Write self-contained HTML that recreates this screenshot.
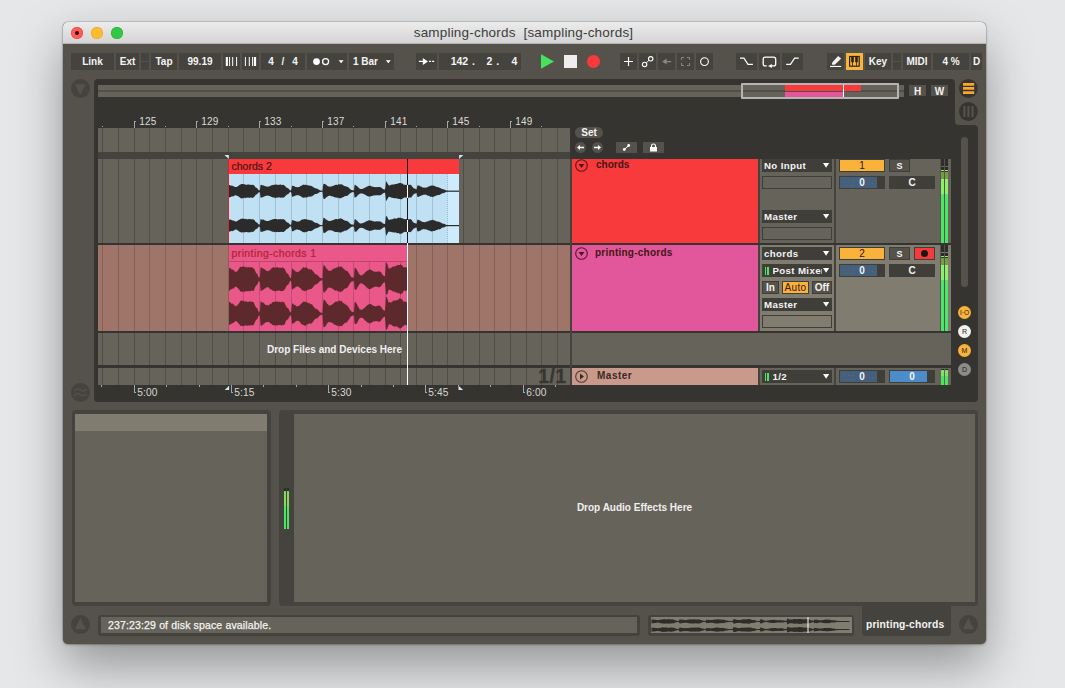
<!DOCTYPE html>
<html><head><meta charset="utf-8"><title>sampling-chords</title>
<style>
html,body{margin:0;padding:0}
body{width:1065px;height:688px;position:relative;overflow:hidden;background:#e6e7e8;font-family:"Liberation Sans",sans-serif}
body>div,body>svg{position:absolute;display:block}
.t{color:#f4f4f4;font-size:10px;font-weight:700;white-space:nowrap;}
</style></head><body>
<div style="left:63px;top:22px;width:923px;height:621.5px;background:#55524b;border-radius:5px;box-shadow:0 0 0 0.5px rgba(0,0,0,.22),0 22px 50px rgba(0,0,0,.36),0 1px 3px rgba(0,0,0,.22);"></div>
<div style="left:63px;top:22px;width:923px;height:22px;background:linear-gradient(#ececec,#d4d4d4);border-radius:5px 5px 0 0;border-bottom:0.5px solid #b4b4b4;box-sizing:border-box;"></div>
<div style="left:71px;top:27px;width:12px;height:12px;background:#fc5b57;border-radius:50%;box-shadow:inset 0 0 0 0.5px #e04640;"></div>
<div style="left:91px;top:27px;width:12px;height:12px;background:#fdbc2e;border-radius:50%;box-shadow:inset 0 0 0 0.5px #e0a028;"></div>
<div style="left:111px;top:27px;width:12px;height:12px;background:#33c748;border-radius:50%;box-shadow:inset 0 0 0 0.5px #27aa35;"></div>
<div style="left:75px;top:31px;width:4px;height:4px;background:#3a0d0b;border-radius:50%;"></div>
<div class="t" style="left:62px;top:22.3px;width:923px;height:22px;line-height:22px;text-align:center;font-weight:400;font-size:13.5px;letter-spacing:0.19px;color:#3c3c3c;">sampling-chords&nbsp;&nbsp;[sampling-chords]</div>
<div style="left:71px;top:53px;width:43px;height:17px;background:#45433d;"></div>
<div class="t" style="left:71px;top:53.1px;width:43px;height:17px;line-height:17px;text-align:center;">Link</div>
<div style="left:116px;top:53px;width:23px;height:17px;background:#45433d;"></div>
<div class="t" style="left:116px;top:53.1px;width:23px;height:17px;line-height:17px;text-align:center;">Ext</div>
<div style="left:141px;top:53px;width:8px;height:8px;background:#45433d;"></div>
<div style="left:141px;top:62px;width:8px;height:8px;background:#45433d;"></div>
<div style="left:151px;top:53px;width:26px;height:17px;background:#45433d;"></div>
<div class="t" style="left:151px;top:53.1px;width:26px;height:17px;line-height:17px;text-align:center;">Tap</div>
<div style="left:179px;top:53px;width:42px;height:17px;background:#45433d;"></div>
<div class="t" style="left:179px;top:53.1px;width:42px;height:17px;line-height:17px;text-align:center;">99.19</div>
<div style="left:223px;top:53px;width:17px;height:17px;background:#45433d;"></div>
<div style="left:242px;top:53px;width:17px;height:17px;background:#45433d;"></div>
<div style="left:261px;top:53px;width:44px;height:17px;background:#45433d;"></div>
<div class="t" style="left:261px;top:53.1px;width:44px;height:17px;line-height:17px;text-align:center;word-spacing:5px;">4 / 4</div>
<div style="left:307px;top:53px;width:40px;height:17px;background:#45433d;"></div>
<div style="left:349px;top:53px;width:45px;height:17px;background:#45433d;"></div>
<div class="t" style="left:353px;top:53.1px;width:30px;height:17px;line-height:17px;">1 Bar</div>
<div style="left:416px;top:53px;width:21px;height:17px;background:#45433d;"></div>
<div style="left:439px;top:53px;width:82px;height:17px;background:#45433d;"></div>
<div class="t" style="left:439px;top:53.1px;width:36px;height:17px;line-height:17px;text-align:right;font-size:10.5px;word-spacing:1px;">142 .</div>
<div class="t" style="left:476px;top:53.1px;width:23.2px;height:17px;line-height:17px;text-align:right;font-size:10.5px;word-spacing:1px;">2 .</div>
<div class="t" style="left:500px;top:53.1px;width:17.3px;height:17px;line-height:17px;text-align:right;font-size:10.5px;">4</div>
<div style="left:620px;top:53px;width:17px;height:17px;background:#45433d;"></div>
<div style="left:639px;top:53px;width:17px;height:17px;background:#45433d;"></div>
<div style="left:658px;top:53px;width:17px;height:17px;background:#45433d;"></div>
<div style="left:677px;top:53px;width:17px;height:17px;background:#45433d;"></div>
<div style="left:696px;top:53px;width:17px;height:17px;background:#45433d;"></div>
<div style="left:736px;top:53px;width:21px;height:17px;background:#45433d;"></div>
<div style="left:759px;top:53px;width:21px;height:17px;background:#45433d;"></div>
<div style="left:782px;top:53px;width:21px;height:17px;background:#45433d;"></div>
<div style="left:827px;top:53px;width:17px;height:17px;background:#45433d;"></div>
<div style="left:846px;top:53px;width:17px;height:17px;background:#f9b23a;"></div>
<div style="left:865px;top:53px;width:26px;height:17px;background:#45433d;"></div>
<div class="t" style="left:865px;top:53.1px;width:26px;height:17px;line-height:17px;text-align:center;">Key</div>
<div style="left:893px;top:53px;width:8px;height:8px;background:#45433d;"></div>
<div style="left:893px;top:62px;width:8px;height:8px;background:#45433d;"></div>
<div style="left:903px;top:53px;width:28px;height:17px;background:#45433d;"></div>
<div class="t" style="left:903px;top:53.1px;width:28px;height:17px;line-height:17px;text-align:center;">MIDI</div>
<div style="left:933px;top:53px;width:36px;height:17px;background:#45433d;"></div>
<div class="t" style="left:933px;top:53.1px;width:36px;height:17px;line-height:17px;text-align:center;">4 %</div>
<div style="left:971px;top:53px;width:11px;height:17px;background:#45433d;"></div>
<div class="t" style="left:971px;top:53.1px;width:11px;height:17px;line-height:17px;text-align:center;">D</div>
<svg style="left:223px;top:53px;" width="17" height="17" viewBox="0 0 17 17"><g fill="#fff"><rect x="2.8" y="4" width="2.1" height="9"/><rect x="6.1" y="4" width="1" height="9"/><rect x="9.2" y="4" width="1" height="9"/><rect x="13.1" y="4" width="1" height="9"/></g></svg>
<svg style="left:242px;top:53px;" width="17" height="17" viewBox="0 0 17 17"><g fill="#fff"><rect x="2.9" y="4" width="1" height="9"/><rect x="6.8" y="4" width="1" height="9"/><rect x="10.1" y="4" width="1.1" height="9"/><rect x="12" y="4" width="2.1" height="9"/></g></svg>
<svg style="left:307px;top:53px;" width="40" height="17" viewBox="0 0 40 17"><circle cx="9.5" cy="8.6" r="3.4" fill="#fff"/><circle cx="18.6" cy="8.6" r="3" fill="none" stroke="#fff" stroke-width="1.3"/><path d="M31.6 7.2h5l-2.5 3z" fill="#fff"/></svg>
<svg style="left:349px;top:53px;" width="45" height="17" viewBox="0 0 45 17"><path d="M36.8 7.2h5l-2.5 3z" fill="#fff"/></svg>
<svg style="left:416px;top:53px;" width="21" height="17" viewBox="0 0 21 17"><path d="M2.8 8.4h5M13 8.4h2.1M16.100 8.4h2.1" stroke="#fff" stroke-width="1.4"/><path d="M6.8 4.9L12 8.4L6.8 11.9z" fill="#fff"/></svg>
<svg style="left:540px;top:53px;" width="16" height="17" viewBox="0 0 16 17"><path d="M1 1.2L14 8.5L1 15.8z" fill="#46e35c"/></svg>
<div style="left:564px;top:55px;width:13px;height:13px;background:#eeeeee;"></div>
<div style="left:587px;top:55px;width:13px;height:13px;background:#f93a3c;border-radius:50%;"></div>
<svg style="left:620px;top:53px;" width="17" height="17" viewBox="0 0 17 17"><path d="M8.5 4v9M4 8.5h9" stroke="#fff" stroke-width="1.2"/></svg>
<svg style="left:639px;top:53px;" width="17" height="17" viewBox="0 0 17 17"><g fill="none" stroke="#fff" stroke-width="1.100"><circle cx="5.600" cy="11.400" r="2.200"/><circle cx="11.700" cy="5.800" r="2.200"/><path d="M7.400 9.800L9.900 7.400" stroke-width="0.900"/></g></svg>
<svg style="left:658px;top:53px;" width="17" height="17" viewBox="0 0 17 17"><path d="M4.200 8.600l4.400-3v2.300h4.600v1.400H8.600v2.300z" fill="#8b887c"/></svg>
<svg style="left:677px;top:53px;" width="17" height="17" viewBox="0 0 17 17"><path d="M4.5 7V4.5H7M10 4.5h2.5V7M12.5 10v2.5H10M7 12.5H4.5V10" fill="none" stroke="#8b887c" stroke-width="1"/></svg>
<svg style="left:696px;top:53px;" width="17" height="17" viewBox="0 0 17 17"><circle cx="8.5" cy="8.6" r="3.9" fill="none" stroke="#fff" stroke-width="1.1"/></svg>
<svg style="left:736px;top:53px;" width="21" height="17" viewBox="0 0 21 17"><path d="M4 5.200H7.900L12 11.400H16.900" fill="none" stroke="#fff" stroke-width="1.200"/></svg>
<svg style="left:759px;top:53px;" width="21" height="17" viewBox="0 0 21 17"><path d="M7.800 12.900H6.200a2 2 0 0 1-2-2V6.200a2 2 0 0 1 2-2H14.700a2 2 0 0 1 2 2V10.900a2 2 0 0 1-2 2H12.500" fill="none" stroke="#fff" stroke-width="1.300"/><path d="M9 12.900l3.900-2v4z" fill="#fff"/></svg>
<svg style="left:782px;top:53px;" width="21" height="17" viewBox="0 0 21 17"><path d="M4.200 11.400H8.500L12.600 5.200H16.800" fill="none" stroke="#fff" stroke-width="1.200"/></svg>
<svg style="left:827px;top:53px;" width="17" height="17" viewBox="0 0 17 17"><rect x="3" y="12.9" width="11.2" height="1.1" fill="#fff"/><path d="M5 9.7L11.100 3.1L14.200 5.500L7.800 11.700H5.100z" fill="#f2f2f2"/></svg>
<svg style="left:846px;top:53px;" width="17" height="17" viewBox="0 0 17 17"><rect x="3.600" y="3.500" width="9.600" height="9.700" fill="none" stroke="#2a2212" stroke-width="1.200"/><path d="M6.500 9v4.500M10.500 9v4.500" stroke="#2a2212" stroke-width="0.800"/><rect x="5.200" y="3.500" width="2.600" height="5.800" fill="#2a2212"/><rect x="9.200" y="3.500" width="2.600" height="5.800" fill="#2a2212"/></svg>
<div style="left:94px;top:79px;width:861px;height:322.5px;background:#353430;border-radius:4px 4px 0 4px;"></div>
<div style="left:94px;top:125px;width:884px;height:276.5px;background:#353430;border-radius:4px;"></div>
<div style="left:955px;top:117px;width:8px;height:8px;background:#353430;"></div>
<div style="left:955px;top:117px;width:8px;height:8px;background:#55524b;border-radius:0 0 0 4px;"></div>
<svg style="left:71px;top:79px;" width="19" height="19" viewBox="0 0 19 19"><circle cx="9.500" cy="9.500" r="9.500" fill="#45433d"/><path d="M3.900 5.200h10.800l-5.400 10.900z" fill="#55524b"/></svg>
<svg style="left:71px;top:383px;" width="19" height="19" viewBox="0 0 19 19"><circle cx="9.500" cy="9.500" r="9.500" fill="#45433d"/><path d="M3.300 8.300C5 5.500 7.300 5.500 9.400 7S13.500 8.600 15.400 5.900M3.300 13C5 10.200 7.300 10.200 9.400 11.700S13.500 13.300 15.400 10.600" fill="none" stroke="#55524b" stroke-width="1.300"/></svg>
<div style="left:98px;top:85px;width:806px;height:5.3px;background:#66635b;"></div>
<div style="left:98px;top:90.3px;width:806px;height:1.9px;background:#524f48;"></div>
<div style="left:98px;top:92.2px;width:806px;height:4.8px;background:#66635b;"></div>
<div style="left:784.5px;top:85px;width:76.5px;height:6px;background:#f93a3c;"></div>
<div style="left:784.5px;top:92px;width:58.5px;height:5px;background:#e2579b;"></div>
<div style="left:741px;top:83px;width:157.9px;height:16px;background:transparent;border:2px solid #b4b4b2;border-left-width:2.5px;border-right-width:2.5px;box-sizing:border-box;border-radius:1px;"></div>
<div style="left:843px;top:85px;width:1px;height:12px;background:#fff;"></div>
<div style="left:899.5px;top:85px;width:4.5px;height:12px;background:#66635b;"></div>
<div style="left:899.5px;top:90.3px;width:4.5px;height:1.9px;background:#524f48;"></div>
<div style="left:909px;top:85px;width:17px;height:11px;background:#55524b;"></div>
<div class="t" style="left:909px;top:85.5px;width:17px;height:11px;line-height:11px;text-align:center;">H</div>
<div style="left:931px;top:85px;width:17px;height:11px;background:#55524b;"></div>
<div class="t" style="left:931px;top:85.5px;width:17px;height:11px;line-height:11px;text-align:center;">W</div>
<svg style="left:959px;top:79px;" width="19" height="19" viewBox="0 0 19 19"><circle cx="9.400" cy="9.500" r="9.400" fill="#353430"/><path d="M4 5.400h11.200M4 9.400h11.200M4 13.600h11.200" stroke="#f9a72a" stroke-width="2.800"/></svg>
<svg style="left:959px;top:102px;" width="19" height="19" viewBox="0 0 19 19"><circle cx="9.400" cy="9.500" r="9.400" fill="#353430"/><path d="M5.400 4.100v11M9.400 4.100v11M13.500 4.100v11" stroke="#55524b" stroke-width="2.100"/></svg>
<div style="left:961px;top:137px;width:7px;height:150px;background:#55524b;border-radius:3.500px;"></div>
<div style="left:102px;top:125.8px;width:1px;height:1.5px;background:#a9a69b;"></div>
<div style="left:134px;top:121px;width:1px;height:7px;background:#a9a69b;"></div>
<div style="left:134px;top:121px;width:2px;height:1px;background:#a9a69b;"></div>
<div class="t" style="left:139.3px;top:117px;width:30px;height:10px;line-height:10px;font-size:10px;letter-spacing:0.200px;font-weight:400;color:#dcdcd8;">125</div>
<div style="left:165px;top:125.8px;width:1px;height:1.5px;background:#a9a69b;"></div>
<div style="left:196px;top:121px;width:1px;height:7px;background:#a9a69b;"></div>
<div style="left:196px;top:121px;width:2px;height:1px;background:#a9a69b;"></div>
<div class="t" style="left:201.3px;top:117px;width:30px;height:10px;line-height:10px;font-size:10px;letter-spacing:0.200px;font-weight:400;color:#dcdcd8;">129</div>
<div style="left:228px;top:125.8px;width:1px;height:1.5px;background:#a9a69b;"></div>
<div style="left:259px;top:121px;width:1px;height:7px;background:#a9a69b;"></div>
<div style="left:259px;top:121px;width:2px;height:1px;background:#a9a69b;"></div>
<div class="t" style="left:264.3px;top:117px;width:30px;height:10px;line-height:10px;font-size:10px;letter-spacing:0.200px;font-weight:400;color:#dcdcd8;">133</div>
<div style="left:291px;top:125.8px;width:1px;height:1.5px;background:#a9a69b;"></div>
<div style="left:322px;top:121px;width:1px;height:7px;background:#a9a69b;"></div>
<div style="left:322px;top:121px;width:2px;height:1px;background:#a9a69b;"></div>
<div class="t" style="left:327.3px;top:117px;width:30px;height:10px;line-height:10px;font-size:10px;letter-spacing:0.200px;font-weight:400;color:#dcdcd8;">137</div>
<div style="left:353px;top:125.8px;width:1px;height:1.5px;background:#a9a69b;"></div>
<div style="left:385px;top:121px;width:1px;height:7px;background:#a9a69b;"></div>
<div style="left:385px;top:121px;width:2px;height:1px;background:#a9a69b;"></div>
<div class="t" style="left:390.3px;top:117px;width:30px;height:10px;line-height:10px;font-size:10px;letter-spacing:0.200px;font-weight:400;color:#dcdcd8;">141</div>
<div style="left:416px;top:125.8px;width:1px;height:1.5px;background:#a9a69b;"></div>
<div style="left:447px;top:121px;width:1px;height:7px;background:#a9a69b;"></div>
<div style="left:447px;top:121px;width:2px;height:1px;background:#a9a69b;"></div>
<div class="t" style="left:452.3px;top:117px;width:30px;height:10px;line-height:10px;font-size:10px;letter-spacing:0.200px;font-weight:400;color:#dcdcd8;">145</div>
<div style="left:479px;top:125.8px;width:1px;height:1.5px;background:#a9a69b;"></div>
<div style="left:510px;top:121px;width:1px;height:7px;background:#a9a69b;"></div>
<div style="left:510px;top:121px;width:2px;height:1px;background:#a9a69b;"></div>
<div class="t" style="left:515.3px;top:117px;width:30px;height:10px;line-height:10px;font-size:10px;letter-spacing:0.200px;font-weight:400;color:#dcdcd8;">149</div>
<div style="left:541px;top:125.8px;width:1px;height:1.5px;background:#a9a69b;"></div>
<div style="left:98px;top:128px;width:472px;height:24px;background:#66635b;"></div>
<div style="left:98px;top:152px;width:472px;height:7px;background:#45433d;"></div>
<div style="left:98px;top:159px;width:472px;height:84px;background:#66635b;"></div>
<div style="left:98px;top:245px;width:472px;height:86px;background:#9e7568;"></div>
<div style="left:98px;top:333px;width:472px;height:32px;background:#66635b;"></div>
<div style="left:98px;top:368px;width:472px;height:17px;background:#66635b;"></div>
<div style="left:102px;top:128px;width:1px;height:24px;background:#504d47;"></div>
<div style="left:118px;top:128px;width:1px;height:24px;background:#504d47;"></div>
<div style="left:134px;top:128px;width:1px;height:24px;background:#504d47;"></div>
<div style="left:149px;top:128px;width:1px;height:24px;background:#504d47;"></div>
<div style="left:165px;top:128px;width:1px;height:24px;background:#504d47;"></div>
<div style="left:181px;top:128px;width:1px;height:24px;background:#504d47;"></div>
<div style="left:196px;top:128px;width:1px;height:24px;background:#504d47;"></div>
<div style="left:212px;top:128px;width:1px;height:24px;background:#504d47;"></div>
<div style="left:228px;top:128px;width:1px;height:24px;background:#504d47;"></div>
<div style="left:243px;top:128px;width:1px;height:24px;background:#504d47;"></div>
<div style="left:259px;top:128px;width:1px;height:24px;background:#504d47;"></div>
<div style="left:275px;top:128px;width:1px;height:24px;background:#504d47;"></div>
<div style="left:291px;top:128px;width:1px;height:24px;background:#504d47;"></div>
<div style="left:306px;top:128px;width:1px;height:24px;background:#504d47;"></div>
<div style="left:322px;top:128px;width:1px;height:24px;background:#504d47;"></div>
<div style="left:338px;top:128px;width:1px;height:24px;background:#504d47;"></div>
<div style="left:353px;top:128px;width:1px;height:24px;background:#504d47;"></div>
<div style="left:369px;top:128px;width:1px;height:24px;background:#504d47;"></div>
<div style="left:385px;top:128px;width:1px;height:24px;background:#504d47;"></div>
<div style="left:400px;top:128px;width:1px;height:24px;background:#504d47;"></div>
<div style="left:416px;top:128px;width:1px;height:24px;background:#504d47;"></div>
<div style="left:432px;top:128px;width:1px;height:24px;background:#504d47;"></div>
<div style="left:447px;top:128px;width:1px;height:24px;background:#504d47;"></div>
<div style="left:463px;top:128px;width:1px;height:24px;background:#504d47;"></div>
<div style="left:479px;top:128px;width:1px;height:24px;background:#504d47;"></div>
<div style="left:494px;top:128px;width:1px;height:24px;background:#504d47;"></div>
<div style="left:510px;top:128px;width:1px;height:24px;background:#504d47;"></div>
<div style="left:526px;top:128px;width:1px;height:24px;background:#504d47;"></div>
<div style="left:541px;top:128px;width:1px;height:24px;background:#504d47;"></div>
<div style="left:557px;top:128px;width:1px;height:24px;background:#504d47;"></div>
<div style="left:102px;top:159px;width:1px;height:84px;background:#504d47;"></div>
<div style="left:118px;top:159px;width:1px;height:84px;background:#504d47;"></div>
<div style="left:134px;top:159px;width:1px;height:84px;background:#504d47;"></div>
<div style="left:149px;top:159px;width:1px;height:84px;background:#504d47;"></div>
<div style="left:165px;top:159px;width:1px;height:84px;background:#504d47;"></div>
<div style="left:181px;top:159px;width:1px;height:84px;background:#504d47;"></div>
<div style="left:196px;top:159px;width:1px;height:84px;background:#504d47;"></div>
<div style="left:212px;top:159px;width:1px;height:84px;background:#504d47;"></div>
<div style="left:228px;top:159px;width:1px;height:84px;background:#504d47;"></div>
<div style="left:243px;top:159px;width:1px;height:84px;background:#504d47;"></div>
<div style="left:259px;top:159px;width:1px;height:84px;background:#504d47;"></div>
<div style="left:275px;top:159px;width:1px;height:84px;background:#504d47;"></div>
<div style="left:291px;top:159px;width:1px;height:84px;background:#504d47;"></div>
<div style="left:306px;top:159px;width:1px;height:84px;background:#504d47;"></div>
<div style="left:322px;top:159px;width:1px;height:84px;background:#504d47;"></div>
<div style="left:338px;top:159px;width:1px;height:84px;background:#504d47;"></div>
<div style="left:353px;top:159px;width:1px;height:84px;background:#504d47;"></div>
<div style="left:369px;top:159px;width:1px;height:84px;background:#504d47;"></div>
<div style="left:385px;top:159px;width:1px;height:84px;background:#504d47;"></div>
<div style="left:400px;top:159px;width:1px;height:84px;background:#504d47;"></div>
<div style="left:416px;top:159px;width:1px;height:84px;background:#504d47;"></div>
<div style="left:432px;top:159px;width:1px;height:84px;background:#504d47;"></div>
<div style="left:447px;top:159px;width:1px;height:84px;background:#504d47;"></div>
<div style="left:463px;top:159px;width:1px;height:84px;background:#504d47;"></div>
<div style="left:479px;top:159px;width:1px;height:84px;background:#504d47;"></div>
<div style="left:494px;top:159px;width:1px;height:84px;background:#504d47;"></div>
<div style="left:510px;top:159px;width:1px;height:84px;background:#504d47;"></div>
<div style="left:526px;top:159px;width:1px;height:84px;background:#504d47;"></div>
<div style="left:541px;top:159px;width:1px;height:84px;background:#504d47;"></div>
<div style="left:557px;top:159px;width:1px;height:84px;background:#504d47;"></div>
<div style="left:102px;top:245px;width:1px;height:86px;background:#86625a;"></div>
<div style="left:118px;top:245px;width:1px;height:86px;background:#86625a;"></div>
<div style="left:134px;top:245px;width:1px;height:86px;background:#86625a;"></div>
<div style="left:149px;top:245px;width:1px;height:86px;background:#86625a;"></div>
<div style="left:165px;top:245px;width:1px;height:86px;background:#86625a;"></div>
<div style="left:181px;top:245px;width:1px;height:86px;background:#86625a;"></div>
<div style="left:196px;top:245px;width:1px;height:86px;background:#86625a;"></div>
<div style="left:212px;top:245px;width:1px;height:86px;background:#86625a;"></div>
<div style="left:228px;top:245px;width:1px;height:86px;background:#86625a;"></div>
<div style="left:243px;top:245px;width:1px;height:86px;background:#86625a;"></div>
<div style="left:259px;top:245px;width:1px;height:86px;background:#86625a;"></div>
<div style="left:275px;top:245px;width:1px;height:86px;background:#86625a;"></div>
<div style="left:291px;top:245px;width:1px;height:86px;background:#86625a;"></div>
<div style="left:306px;top:245px;width:1px;height:86px;background:#86625a;"></div>
<div style="left:322px;top:245px;width:1px;height:86px;background:#86625a;"></div>
<div style="left:338px;top:245px;width:1px;height:86px;background:#86625a;"></div>
<div style="left:353px;top:245px;width:1px;height:86px;background:#86625a;"></div>
<div style="left:369px;top:245px;width:1px;height:86px;background:#86625a;"></div>
<div style="left:385px;top:245px;width:1px;height:86px;background:#86625a;"></div>
<div style="left:400px;top:245px;width:1px;height:86px;background:#86625a;"></div>
<div style="left:416px;top:245px;width:1px;height:86px;background:#86625a;"></div>
<div style="left:432px;top:245px;width:1px;height:86px;background:#86625a;"></div>
<div style="left:447px;top:245px;width:1px;height:86px;background:#86625a;"></div>
<div style="left:463px;top:245px;width:1px;height:86px;background:#86625a;"></div>
<div style="left:479px;top:245px;width:1px;height:86px;background:#86625a;"></div>
<div style="left:494px;top:245px;width:1px;height:86px;background:#86625a;"></div>
<div style="left:510px;top:245px;width:1px;height:86px;background:#86625a;"></div>
<div style="left:526px;top:245px;width:1px;height:86px;background:#86625a;"></div>
<div style="left:541px;top:245px;width:1px;height:86px;background:#86625a;"></div>
<div style="left:557px;top:245px;width:1px;height:86px;background:#86625a;"></div>
<div style="left:102px;top:333px;width:1px;height:32px;background:#504d47;"></div>
<div style="left:118px;top:333px;width:1px;height:32px;background:#504d47;"></div>
<div style="left:134px;top:333px;width:1px;height:32px;background:#504d47;"></div>
<div style="left:149px;top:333px;width:1px;height:32px;background:#504d47;"></div>
<div style="left:165px;top:333px;width:1px;height:32px;background:#504d47;"></div>
<div style="left:181px;top:333px;width:1px;height:32px;background:#504d47;"></div>
<div style="left:196px;top:333px;width:1px;height:32px;background:#504d47;"></div>
<div style="left:212px;top:333px;width:1px;height:32px;background:#504d47;"></div>
<div style="left:228px;top:333px;width:1px;height:32px;background:#504d47;"></div>
<div style="left:243px;top:333px;width:1px;height:32px;background:#504d47;"></div>
<div style="left:259px;top:333px;width:1px;height:32px;background:#504d47;"></div>
<div style="left:275px;top:333px;width:1px;height:32px;background:#504d47;"></div>
<div style="left:291px;top:333px;width:1px;height:32px;background:#504d47;"></div>
<div style="left:306px;top:333px;width:1px;height:32px;background:#504d47;"></div>
<div style="left:322px;top:333px;width:1px;height:32px;background:#504d47;"></div>
<div style="left:338px;top:333px;width:1px;height:32px;background:#504d47;"></div>
<div style="left:353px;top:333px;width:1px;height:32px;background:#504d47;"></div>
<div style="left:369px;top:333px;width:1px;height:32px;background:#504d47;"></div>
<div style="left:385px;top:333px;width:1px;height:32px;background:#504d47;"></div>
<div style="left:400px;top:333px;width:1px;height:32px;background:#504d47;"></div>
<div style="left:416px;top:333px;width:1px;height:32px;background:#504d47;"></div>
<div style="left:432px;top:333px;width:1px;height:32px;background:#504d47;"></div>
<div style="left:447px;top:333px;width:1px;height:32px;background:#504d47;"></div>
<div style="left:463px;top:333px;width:1px;height:32px;background:#504d47;"></div>
<div style="left:479px;top:333px;width:1px;height:32px;background:#504d47;"></div>
<div style="left:494px;top:333px;width:1px;height:32px;background:#504d47;"></div>
<div style="left:510px;top:333px;width:1px;height:32px;background:#504d47;"></div>
<div style="left:526px;top:333px;width:1px;height:32px;background:#504d47;"></div>
<div style="left:541px;top:333px;width:1px;height:32px;background:#504d47;"></div>
<div style="left:557px;top:333px;width:1px;height:32px;background:#504d47;"></div>
<div style="left:102px;top:368px;width:1px;height:17px;background:#504d47;"></div>
<div style="left:118px;top:368px;width:1px;height:17px;background:#504d47;"></div>
<div style="left:134px;top:368px;width:1px;height:17px;background:#504d47;"></div>
<div style="left:149px;top:368px;width:1px;height:17px;background:#504d47;"></div>
<div style="left:165px;top:368px;width:1px;height:17px;background:#504d47;"></div>
<div style="left:181px;top:368px;width:1px;height:17px;background:#504d47;"></div>
<div style="left:196px;top:368px;width:1px;height:17px;background:#504d47;"></div>
<div style="left:212px;top:368px;width:1px;height:17px;background:#504d47;"></div>
<div style="left:228px;top:368px;width:1px;height:17px;background:#504d47;"></div>
<div style="left:243px;top:368px;width:1px;height:17px;background:#504d47;"></div>
<div style="left:259px;top:368px;width:1px;height:17px;background:#504d47;"></div>
<div style="left:275px;top:368px;width:1px;height:17px;background:#504d47;"></div>
<div style="left:291px;top:368px;width:1px;height:17px;background:#504d47;"></div>
<div style="left:306px;top:368px;width:1px;height:17px;background:#504d47;"></div>
<div style="left:322px;top:368px;width:1px;height:17px;background:#504d47;"></div>
<div style="left:338px;top:368px;width:1px;height:17px;background:#504d47;"></div>
<div style="left:353px;top:368px;width:1px;height:17px;background:#504d47;"></div>
<div style="left:369px;top:368px;width:1px;height:17px;background:#504d47;"></div>
<div style="left:385px;top:368px;width:1px;height:17px;background:#504d47;"></div>
<div style="left:400px;top:368px;width:1px;height:17px;background:#504d47;"></div>
<div style="left:416px;top:368px;width:1px;height:17px;background:#504d47;"></div>
<div style="left:432px;top:368px;width:1px;height:17px;background:#504d47;"></div>
<div style="left:447px;top:368px;width:1px;height:17px;background:#504d47;"></div>
<div style="left:463px;top:368px;width:1px;height:17px;background:#504d47;"></div>
<div style="left:479px;top:368px;width:1px;height:17px;background:#504d47;"></div>
<div style="left:494px;top:368px;width:1px;height:17px;background:#504d47;"></div>
<div style="left:510px;top:368px;width:1px;height:17px;background:#504d47;"></div>
<div style="left:526px;top:368px;width:1px;height:17px;background:#504d47;"></div>
<div style="left:541px;top:368px;width:1px;height:17px;background:#504d47;"></div>
<div style="left:557px;top:368px;width:1px;height:17px;background:#504d47;"></div>
<div style="left:228.5px;top:159px;width:230.5px;height:14.5px;background:#f93a3c;"></div>
<div style="left:228.5px;top:173.5px;width:230.5px;height:69.3px;background:#c0e1f3;"></div>
<div style="left:447.8px;top:173.5px;width:11.199999999999989px;height:69.3px;background:#cdebfb;"></div>
<div style="left:243px;top:173.5px;width:1px;height:69.3px;background:#a0c0d4;"></div>
<div style="left:259px;top:173.5px;width:1px;height:69.3px;background:#a0c0d4;"></div>
<div style="left:275px;top:173.5px;width:1px;height:69.3px;background:#a0c0d4;"></div>
<div style="left:291px;top:173.5px;width:1px;height:69.3px;background:#a0c0d4;"></div>
<div style="left:306px;top:173.5px;width:1px;height:69.3px;background:#a0c0d4;"></div>
<div style="left:322px;top:173.5px;width:1px;height:69.3px;background:#a0c0d4;"></div>
<div style="left:338px;top:173.5px;width:1px;height:69.3px;background:#a0c0d4;"></div>
<div style="left:353px;top:173.5px;width:1px;height:69.3px;background:#a0c0d4;"></div>
<div style="left:369px;top:173.5px;width:1px;height:69.3px;background:#a0c0d4;"></div>
<div style="left:385px;top:173.5px;width:1px;height:69.3px;background:#a0c0d4;"></div>
<div style="left:400px;top:173.5px;width:1px;height:69.3px;background:#a0c0d4;"></div>
<div style="left:416px;top:173.5px;width:1px;height:69.3px;background:#a0c0d4;"></div>
<div style="left:432px;top:173.5px;width:1px;height:69.3px;background:#a0c0d4;"></div>
<div style="left:447px;top:173.5px;width:1px;height:69.3px;background:transparent;border-left:1px dotted #9dbdd2;box-sizing:border-box;"></div>
<div style="left:228.0px;top:159px;width:1.2px;height:83.8px;background:#d3272b;"></div>
<div class="t" style="left:231.5px;top:159.3px;width:120px;height:14.5px;line-height:14.5px;font-size:10.5px;font-weight:400;color:#4a1414;-webkit-text-stroke:0.2px #4a1414;">chords 2</div>
<div style="left:228.5px;top:245px;width:179.0px;height:85.7px;background:#ea5789;"></div>
<div style="left:228.5px;top:261.3px;width:179.0px;height:0.8px;background:#c4416f;"></div>
<div style="left:243px;top:262px;width:1px;height:68.7px;background:#c7497b;"></div>
<div style="left:259px;top:262px;width:1px;height:68.7px;background:#c7497b;"></div>
<div style="left:275px;top:262px;width:1px;height:68.7px;background:#c7497b;"></div>
<div style="left:291px;top:262px;width:1px;height:68.7px;background:#c7497b;"></div>
<div style="left:306px;top:262px;width:1px;height:68.7px;background:#c7497b;"></div>
<div style="left:322px;top:262px;width:1px;height:68.7px;background:#c7497b;"></div>
<div style="left:338px;top:262px;width:1px;height:68.7px;background:#c7497b;"></div>
<div style="left:353px;top:262px;width:1px;height:68.7px;background:#c7497b;"></div>
<div style="left:369px;top:262px;width:1px;height:68.7px;background:#c7497b;"></div>
<div style="left:385px;top:262px;width:1px;height:68.7px;background:#c7497b;"></div>
<div style="left:400px;top:262px;width:1px;height:68.7px;background:#c7497b;"></div>
<div class="t" style="left:231.5px;top:245.5px;width:160px;height:15.5px;line-height:15.5px;font-size:10.5px;letter-spacing:0.4px;font-weight:400;color:#b2242f;-webkit-text-stroke:0.2px #b2242f;">printing-chords 1</div>
<svg style="left:0px;top:0px;pointer-events:none;" width="1065" height="688" viewBox="0 0 1065 688"><path d="M229.0 185.0 L229.5 185.0 L230.0 185.1 L230.5 185.7 L231.0 185.7 L231.5 185.5 L232.0 185.7 L232.5 185.8 L233.0 185.9 L233.5 186.2 L234.0 186.4 L234.5 186.7 L235.0 187.1 L235.5 187.0 L236.0 187.0 L236.5 186.9 L237.0 186.9 L237.5 186.6 L238.0 186.0 L238.5 186.0 L239.0 185.2 L239.5 185.0 L240.0 184.8 L240.5 184.6 L241.0 184.3 L241.5 184.1 L242.0 184.0 L242.5 184.1 L243.0 184.1 L243.5 184.1 L244.0 184.3 L244.5 184.2 L245.0 184.7 L245.5 184.3 L246.0 184.9 L246.5 184.7 L247.0 184.8 L247.5 184.4 L248.0 184.6 L248.5 184.5 L249.0 184.4 L249.5 184.7 L250.0 184.8 L250.5 184.7 L251.0 184.9 L251.5 184.7 L252.0 185.1 L252.5 184.9 L253.0 184.5 L253.5 185.0 L254.0 185.3 L254.5 185.9 L255.0 186.4 L255.5 187.2 L256.0 187.8 L256.5 187.8 L257.0 188.1 L257.5 188.6 L258.0 189.4 L258.5 189.9 L259.0 190.2 L259.5 190.4 L260.0 189.2 L260.5 185.1 L261.0 184.7 L261.5 185.0 L262.0 184.9 L262.5 185.2 L263.0 185.4 L263.5 185.6 L264.0 185.6 L264.5 185.9 L265.0 186.2 L265.5 186.1 L266.0 186.6 L266.5 186.5 L267.0 186.7 L267.5 186.6 L268.0 186.5 L268.5 186.7 L269.0 186.3 L269.5 186.5 L270.0 186.1 L270.5 185.7 L271.0 185.8 L271.5 185.3 L272.0 185.0 L272.5 185.3 L273.0 184.7 L273.5 184.9 L274.0 184.8 L274.5 184.5 L275.0 185.1 L275.5 184.5 L276.0 184.8 L276.5 184.5 L277.0 184.6 L277.5 184.7 L278.0 185.0 L278.5 185.0 L279.0 184.8 L279.5 184.7 L280.0 184.6 L280.5 184.6 L281.0 184.6 L281.5 185.2 L282.0 185.1 L282.5 184.8 L283.0 184.9 L283.5 184.8 L284.0 185.2 L284.5 185.4 L285.0 186.0 L285.5 186.5 L286.0 187.2 L286.5 187.4 L287.0 187.8 L287.5 187.9 L288.0 188.3 L288.5 188.6 L289.0 189.2 L289.5 189.7 L290.0 190.2 L290.5 190.4 L291.0 190.5 L291.5 188.5 L292.0 185.7 L292.5 185.8 L293.0 185.7 L293.5 186.1 L294.0 186.3 L294.5 186.3 L295.0 186.8 L295.5 186.9 L296.0 186.9 L296.5 187.0 L297.0 187.2 L297.5 187.2 L298.0 187.2 L298.5 187.1 L299.0 186.9 L299.5 186.9 L300.0 186.5 L300.5 186.0 L301.0 185.7 L301.5 185.8 L302.0 185.6 L302.5 185.0 L303.0 184.7 L303.5 184.6 L304.0 185.0 L304.5 185.0 L305.0 184.5 L305.5 185.0 L306.0 184.6 L306.5 185.3 L307.0 185.3 L307.5 185.2 L308.0 185.1 L308.5 185.4 L309.0 185.5 L309.5 185.6 L310.0 185.7 L310.5 186.1 L311.0 185.8 L311.5 186.1 L312.0 186.3 L312.5 186.4 L313.0 186.9 L313.5 187.3 L314.0 187.7 L314.5 187.7 L315.0 188.1 L315.5 188.3 L316.0 188.5 L316.5 188.5 L317.0 188.5 L317.5 188.9 L318.0 189.0 L318.5 189.4 L319.0 189.8 L319.5 190.1 L320.0 190.4 L320.5 190.5 L321.0 190.6 L321.5 190.6 L322.0 190.7 L322.5 190.7 L323.0 185.9 L323.5 183.8 L324.0 183.8 L324.5 184.1 L325.0 184.1 L325.5 184.5 L326.0 184.6 L326.5 185.2 L327.0 185.4 L327.5 185.9 L328.0 186.3 L328.5 186.6 L329.0 186.6 L329.5 186.5 L330.0 186.8 L330.5 186.8 L331.0 186.3 L331.5 186.5 L332.0 186.3 L332.5 185.9 L333.0 186.0 L333.5 185.7 L334.0 185.3 L334.5 185.5 L335.0 185.1 L335.5 185.1 L336.0 184.5 L336.5 184.8 L337.0 184.9 L337.5 185.0 L338.0 184.4 L338.5 184.2 L339.0 184.2 L339.5 184.5 L340.0 184.2 L340.5 184.4 L341.0 184.0 L341.5 184.4 L342.0 184.6 L342.5 184.7 L343.0 185.1 L343.5 185.4 L344.0 185.9 L344.5 185.9 L345.0 186.0 L345.5 186.4 L346.0 186.3 L346.5 186.4 L347.0 186.7 L347.5 187.0 L348.0 187.1 L348.5 187.5 L349.0 188.1 L349.5 188.4 L350.0 189.0 L350.5 189.3 L351.0 189.7 L351.5 189.9 L352.0 190.1 L352.5 190.2 L353.0 190.3 L353.5 190.4 L354.0 189.9 L354.5 185.4 L355.0 184.6 L355.5 185.0 L356.0 185.4 L356.5 185.7 L357.0 186.3 L357.5 186.6 L358.0 187.1 L358.5 187.6 L359.0 188.2 L359.5 188.6 L360.0 188.8 L360.5 189.0 L361.0 189.0 L361.5 189.1 L362.0 188.9 L362.5 188.8 L363.0 188.7 L363.5 188.5 L364.0 188.1 L364.5 187.9 L365.0 187.5 L365.5 187.2 L366.0 187.3 L366.5 186.9 L367.0 186.6 L367.5 186.5 L368.0 186.1 L368.5 185.9 L369.0 185.8 L369.5 185.8 L370.0 185.8 L370.5 185.8 L371.0 186.0 L371.5 186.4 L372.0 186.6 L372.5 186.7 L373.0 186.6 L373.5 186.9 L374.0 187.1 L374.5 187.0 L375.0 187.3 L375.5 187.0 L376.0 187.2 L376.5 187.1 L377.0 187.3 L377.5 186.9 L378.0 187.0 L378.5 187.1 L379.0 187.0 L379.5 187.1 L380.0 187.1 L380.5 187.3 L381.0 187.4 L381.5 187.7 L382.0 188.2 L382.5 188.7 L383.0 189.1 L383.5 189.3 L384.0 189.4 L384.5 189.6 L385.0 189.5 L385.5 185.9 L386.0 180.9 L386.5 182.0 L387.0 182.2 L387.5 183.6 L388.0 184.2 L388.5 185.0 L389.0 185.6 L389.5 185.5 L390.0 185.5 L390.5 184.9 L391.0 184.7 L391.5 184.7 L392.0 184.5 L392.5 184.7 L393.0 184.2 L393.5 184.5 L394.0 184.6 L394.5 184.4 L395.0 183.9 L395.5 184.0 L396.0 183.9 L396.5 183.7 L397.0 183.9 L397.5 183.5 L398.0 183.7 L398.5 183.2 L399.0 183.1 L399.5 183.1 L400.0 182.9 L400.5 183.1 L401.0 183.0 L401.5 183.5 L402.0 183.5 L402.5 183.6 L403.0 183.9 L403.5 184.6 L404.0 184.9 L404.5 184.5 L405.0 184.7 L405.5 185.0 L406.0 184.9 L406.5 185.0 L407.0 184.7 L407.5 185.0 L408.0 185.0 L408.5 184.8 L409.0 184.7 L409.5 184.8 L410.0 185.0 L410.5 184.6 L411.0 185.3 L411.5 185.6 L412.0 186.3 L412.5 186.9 L413.0 187.4 L413.5 187.9 L414.0 188.4 L414.5 188.5 L415.0 188.6 L415.5 188.9 L416.0 189.3 L416.5 189.4 L417.0 187.3 L417.5 185.6 L418.0 185.2 L418.5 185.4 L419.0 185.8 L419.5 185.6 L420.0 186.2 L420.5 186.5 L421.0 186.5 L421.5 186.8 L422.0 187.2 L422.5 187.4 L423.0 187.4 L423.5 187.6 L424.0 187.7 L424.5 187.6 L425.0 187.8 L425.5 187.7 L426.0 187.4 L426.5 187.4 L427.0 187.4 L427.5 187.1 L428.0 186.8 L428.5 186.4 L429.0 186.5 L429.5 186.2 L430.0 186.1 L430.5 185.7 L431.0 185.4 L431.5 185.7 L432.0 185.6 L432.5 185.5 L433.0 185.7 L433.5 185.8 L434.0 185.6 L434.5 186.1 L435.0 186.1 L435.5 186.6 L436.0 186.7 L436.5 187.1 L437.0 187.0 L437.5 187.0 L438.0 187.1 L438.5 187.5 L439.0 187.4 L439.5 187.7 L440.0 187.9 L440.5 188.1 L441.0 188.4 L441.5 188.8 L442.0 188.9 L442.5 189.0 L443.0 189.3 L443.5 189.2 L444.0 189.4 L444.5 189.6 L445.0 189.9 L445.5 190.1 L446.0 190.4 L446.5 190.6 L447.0 190.6 L447.5 190.7 L447.5 191.7 L447.0 191.7 L446.5 191.8 L446.0 192.0 L445.5 192.3 L445.0 192.5 L444.5 192.8 L444.0 193.1 L443.5 193.2 L443.0 193.1 L442.5 193.3 L442.0 193.5 L441.5 193.7 L441.0 194.0 L440.5 194.5 L440.0 194.6 L439.5 194.9 L439.0 195.0 L438.5 194.9 L438.0 194.9 L437.5 195.3 L437.0 195.3 L436.5 195.4 L436.0 195.6 L435.5 196.0 L435.0 195.9 L434.5 196.3 L434.0 196.7 L433.5 196.7 L433.0 197.0 L432.5 196.9 L432.0 196.8 L431.5 196.6 L431.0 196.9 L430.5 196.9 L430.0 196.6 L429.5 196.0 L429.0 196.0 L428.5 195.8 L428.0 195.7 L427.5 195.4 L427.0 195.3 L426.5 195.1 L426.0 194.8 L425.5 194.6 L425.0 194.8 L424.5 194.8 L424.0 194.6 L423.5 194.7 L423.0 194.9 L422.5 194.9 L422.0 195.4 L421.5 195.6 L421.0 195.8 L420.5 195.8 L420.0 196.0 L419.5 196.4 L419.0 196.6 L418.5 197.0 L418.0 197.0 L417.5 197.1 L417.0 195.2 L416.5 192.9 L416.0 193.1 L415.5 193.4 L415.0 193.8 L414.5 193.8 L414.0 194.0 L413.5 194.5 L413.0 195.0 L412.5 195.8 L412.0 196.3 L411.5 197.2 L411.0 197.7 L410.5 197.4 L410.0 197.3 L409.5 197.4 L409.0 197.8 L408.5 197.8 L408.0 197.7 L407.5 197.9 L407.0 197.3 L406.5 197.7 L406.0 197.3 L405.5 197.7 L405.0 197.4 L404.5 197.4 L404.0 197.7 L403.5 197.8 L403.0 198.4 L402.5 198.5 L402.0 199.1 L401.5 199.3 L401.0 198.9 L400.5 199.5 L400.0 198.9 L399.5 199.0 L399.0 199.1 L398.5 199.1 L398.0 198.6 L397.5 198.7 L397.0 198.4 L396.5 198.3 L396.0 198.3 L395.5 198.4 L395.0 197.9 L394.5 198.3 L394.0 198.0 L393.5 198.3 L393.0 197.7 L392.5 197.9 L392.0 197.4 L391.5 197.8 L391.0 197.4 L390.5 197.1 L390.0 197.2 L389.5 196.8 L389.0 196.8 L388.5 197.1 L388.0 198.4 L387.5 198.6 L387.0 200.0 L386.5 200.5 L386.0 200.9 L385.5 196.3 L385.0 192.8 L384.5 192.8 L384.0 192.9 L383.5 193.1 L383.0 193.3 L382.5 193.9 L382.0 194.2 L381.5 194.5 L381.0 195.0 L380.5 195.1 L380.0 195.4 L379.5 195.3 L379.0 195.3 L378.5 195.3 L378.0 195.3 L377.5 195.2 L377.0 195.2 L376.5 195.2 L376.0 195.3 L375.5 195.2 L375.0 195.4 L374.5 195.3 L374.0 195.4 L373.5 195.6 L373.0 195.7 L372.5 195.8 L372.0 195.9 L371.5 195.9 L371.0 196.3 L370.5 196.3 L370.0 196.7 L369.5 196.4 L369.0 196.5 L368.5 196.4 L368.0 196.0 L367.5 196.2 L367.0 196.0 L366.5 195.4 L366.0 195.3 L365.5 195.1 L365.0 194.6 L364.5 194.6 L364.0 194.2 L363.5 194.0 L363.0 193.8 L362.5 193.6 L362.0 193.5 L361.5 193.4 L361.0 193.4 L360.5 193.4 L360.0 193.5 L359.5 193.9 L359.0 194.2 L358.5 194.6 L358.0 195.3 L357.5 195.5 L357.0 196.1 L356.5 196.7 L356.0 196.9 L355.5 197.2 L355.0 197.7 L354.5 197.2 L354.0 192.5 L353.5 192.0 L353.0 192.1 L352.5 192.2 L352.0 192.3 L351.5 192.5 L351.0 192.7 L350.5 193.0 L350.0 193.4 L349.5 193.8 L349.0 194.3 L348.5 194.8 L348.0 195.2 L347.5 195.7 L347.0 195.7 L346.5 196.0 L346.0 196.0 L345.5 196.2 L345.0 196.0 L344.5 196.2 L344.0 196.9 L343.5 197.0 L343.0 197.1 L342.5 197.6 L342.0 197.7 L341.5 197.7 L341.0 198.2 L340.5 198.3 L340.0 198.3 L339.5 198.2 L339.0 198.2 L338.5 197.8 L338.0 197.5 L337.5 197.9 L337.0 197.7 L336.5 197.4 L336.0 197.5 L335.5 197.5 L335.0 197.4 L334.5 197.1 L334.0 197.1 L333.5 196.7 L333.0 196.8 L332.5 196.2 L332.0 196.2 L331.5 196.2 L331.0 196.1 L330.5 195.9 L330.0 195.6 L329.5 195.6 L329.0 195.9 L328.5 196.0 L328.0 196.0 L327.5 196.7 L327.0 196.7 L326.5 197.3 L326.0 197.6 L325.5 198.2 L325.0 198.4 L324.5 198.9 L324.0 199.0 L323.5 198.8 L323.0 196.4 L322.5 191.7 L322.0 191.7 L321.5 191.8 L321.0 191.9 L320.5 191.9 L320.0 192.0 L319.5 192.3 L319.0 192.6 L318.5 193.0 L318.0 193.3 L317.5 193.6 L317.0 193.7 L316.5 193.9 L316.0 193.9 L315.5 194.1 L315.0 194.1 L314.5 194.5 L314.0 194.8 L313.5 195.2 L313.0 195.5 L312.5 195.9 L312.0 196.3 L311.5 196.2 L311.0 196.7 L310.5 196.5 L310.0 196.8 L309.5 196.4 L309.0 196.7 L308.5 196.6 L308.0 197.0 L307.5 197.3 L307.0 197.5 L306.5 197.6 L306.0 197.3 L305.5 197.4 L305.0 197.4 L304.5 197.5 L304.0 197.8 L303.5 197.7 L303.0 197.6 L302.5 197.5 L302.0 197.2 L301.5 196.7 L301.0 196.6 L300.5 196.1 L300.0 196.1 L299.5 195.6 L299.0 195.5 L298.5 195.2 L298.0 195.3 L297.5 195.2 L297.0 195.1 L296.5 195.3 L296.0 195.4 L295.5 195.6 L295.0 195.7 L294.5 196.0 L294.0 196.3 L293.5 196.4 L293.0 196.5 L292.5 196.8 L292.0 196.7 L291.5 194.0 L291.0 191.9 L290.5 192.0 L290.0 192.2 L289.5 192.6 L289.0 193.3 L288.5 193.8 L288.0 194.2 L287.5 194.5 L287.0 194.3 L286.5 194.9 L286.0 195.4 L285.5 196.0 L285.0 196.3 L284.5 197.1 L284.0 197.6 L283.5 197.4 L283.0 197.8 L282.5 197.5 L282.0 197.4 L281.5 197.7 L281.0 197.6 L280.5 197.8 L280.0 197.7 L279.5 197.3 L279.0 197.4 L278.5 197.3 L278.0 197.5 L277.5 197.6 L277.0 197.8 L276.5 197.4 L276.0 197.9 L275.5 197.9 L275.0 197.9 L274.5 197.4 L274.0 197.6 L273.5 197.5 L273.0 197.4 L272.5 197.2 L272.0 197.1 L271.5 197.1 L271.0 196.6 L270.5 196.7 L270.0 196.1 L269.5 195.9 L269.0 195.9 L268.5 195.8 L268.0 195.6 L267.5 195.7 L267.0 195.7 L266.5 195.6 L266.0 195.9 L265.5 196.0 L265.0 196.1 L264.5 196.6 L264.0 196.4 L263.5 196.8 L263.0 197.2 L262.5 197.2 L262.0 197.3 L261.5 197.5 L261.0 197.9 L260.5 197.3 L260.0 193.2 L259.5 192.0 L259.0 192.2 L258.5 192.4 L258.0 193.1 L257.5 193.8 L257.0 194.2 L256.5 194.4 L256.0 194.6 L255.5 195.3 L255.0 195.8 L254.5 196.5 L254.0 197.1 L253.5 197.5 L253.0 197.5 L252.5 197.9 L252.0 197.9 L251.5 197.4 L251.0 197.6 L250.5 197.4 L250.0 197.4 L249.5 198.0 L249.0 198.0 L248.5 197.6 L248.0 197.4 L247.5 197.4 L247.0 197.9 L246.5 197.5 L246.0 198.0 L245.5 198.2 L245.0 197.6 L244.5 198.0 L244.0 197.8 L243.5 198.1 L243.0 198.4 L242.5 197.9 L242.0 198.5 L241.5 198.4 L241.0 198.3 L240.5 197.9 L240.0 197.6 L239.5 197.2 L239.0 196.9 L238.5 196.4 L238.0 196.0 L237.5 196.1 L237.0 195.7 L236.5 195.6 L236.0 195.4 L235.5 195.3 L235.0 195.2 L234.5 195.7 L234.0 195.7 L233.5 196.3 L233.0 196.6 L232.5 196.3 L232.0 196.6 L231.5 196.6 L231.0 196.7 L230.5 197.2 L230.0 197.0 L229.5 197.5 L229.0 197.6Z" fill="#2b2b2b"/><rect x="446.8" y="190.6" width="12.2" height="1.2" fill="#2b2b2b"/><path d="M229.0 219.4 L229.5 219.4 L230.0 219.8 L230.5 219.5 L231.0 219.8 L231.5 220.1 L232.0 220.4 L232.5 220.4 L233.0 220.2 L233.5 220.5 L234.0 221.0 L234.5 221.1 L235.0 221.2 L235.5 221.5 L236.0 221.5 L236.5 221.4 L237.0 221.0 L237.5 220.9 L238.0 220.4 L238.5 220.0 L239.0 219.9 L239.5 219.4 L240.0 219.4 L240.5 218.7 L241.0 219.0 L241.5 218.8 L242.0 218.7 L242.5 218.3 L243.0 218.8 L243.5 218.7 L244.0 218.9 L244.5 219.0 L245.0 218.6 L245.5 219.3 L246.0 218.8 L246.5 219.2 L247.0 219.3 L247.5 219.4 L248.0 218.8 L248.5 218.9 L249.0 219.4 L249.5 218.8 L250.0 219.2 L250.5 219.1 L251.0 219.3 L251.5 219.2 L252.0 219.2 L252.5 219.3 L253.0 219.5 L253.5 219.2 L254.0 219.9 L254.5 220.1 L255.0 221.1 L255.5 221.8 L256.0 222.0 L256.5 222.5 L257.0 222.6 L257.5 223.1 L258.0 223.7 L258.5 224.3 L259.0 224.6 L259.5 224.8 L260.0 223.7 L260.5 219.0 L261.0 219.5 L261.5 219.4 L262.0 219.5 L262.5 219.7 L263.0 219.4 L263.5 219.6 L264.0 219.9 L264.5 220.2 L265.0 220.5 L265.5 220.8 L266.0 220.7 L266.5 221.1 L267.0 220.9 L267.5 221.0 L268.0 221.0 L268.5 221.1 L269.0 220.7 L269.5 220.5 L270.0 220.4 L270.5 220.1 L271.0 219.8 L271.5 220.1 L272.0 219.5 L272.5 219.3 L273.0 219.5 L273.5 218.9 L274.0 218.9 L274.5 219.0 L275.0 218.9 L275.5 218.9 L276.0 219.1 L276.5 218.9 L277.0 219.2 L277.5 219.5 L278.0 219.2 L278.5 219.0 L279.0 219.5 L279.5 219.1 L280.0 219.6 L280.5 219.1 L281.0 219.2 L281.5 219.1 L282.0 219.4 L282.5 219.0 L283.0 219.5 L283.5 219.1 L284.0 219.5 L284.5 219.7 L285.0 220.1 L285.5 221.0 L286.0 221.5 L286.5 222.1 L287.0 222.4 L287.5 222.4 L288.0 222.5 L288.5 222.9 L289.0 223.6 L289.5 224.1 L290.0 224.5 L290.5 224.8 L291.0 225.0 L291.5 222.7 L292.0 219.9 L292.5 220.2 L293.0 220.2 L293.5 220.5 L294.0 220.4 L294.5 220.8 L295.0 220.9 L295.5 221.1 L296.0 221.6 L296.5 221.4 L297.0 221.5 L297.5 221.6 L298.0 221.6 L298.5 221.5 L299.0 221.5 L299.5 221.2 L300.0 221.1 L300.5 220.4 L301.0 220.2 L301.5 219.8 L302.0 219.7 L302.5 219.5 L303.0 219.2 L303.5 219.4 L304.0 219.0 L304.5 219.0 L305.0 219.2 L305.5 219.2 L306.0 219.0 L306.5 219.5 L307.0 219.6 L307.5 219.4 L308.0 219.9 L308.5 219.8 L309.0 220.1 L309.5 220.3 L310.0 220.1 L310.5 220.3 L311.0 220.2 L311.5 220.6 L312.0 220.4 L312.5 220.8 L313.0 221.4 L313.5 221.7 L314.0 221.8 L314.5 222.4 L315.0 222.6 L315.5 222.9 L316.0 222.9 L316.5 222.8 L317.0 223.0 L317.5 223.3 L318.0 223.5 L318.5 223.9 L319.0 224.2 L319.5 224.5 L320.0 224.7 L320.5 224.9 L321.0 225.0 L321.5 225.0 L322.0 225.1 L322.5 225.1 L323.0 220.5 L323.5 217.6 L324.0 218.1 L324.5 218.0 L325.0 218.6 L325.5 219.2 L326.0 219.5 L326.5 219.8 L327.0 219.8 L327.5 220.5 L328.0 220.7 L328.5 221.1 L329.0 220.8 L329.5 220.9 L330.0 221.1 L330.5 220.9 L331.0 221.1 L331.5 220.6 L332.0 220.5 L332.5 220.3 L333.0 220.1 L333.5 219.8 L334.0 219.9 L334.5 219.5 L335.0 219.2 L335.5 219.1 L336.0 219.1 L336.5 219.1 L337.0 218.9 L337.5 219.4 L338.0 219.0 L338.5 218.9 L339.0 219.0 L339.5 218.5 L340.0 218.5 L340.5 218.3 L341.0 218.7 L341.5 218.6 L342.0 218.9 L342.5 219.1 L343.0 219.6 L343.5 219.9 L344.0 220.0 L344.5 220.5 L345.0 220.5 L345.5 220.8 L346.0 220.7 L346.5 220.9 L347.0 220.8 L347.5 221.3 L348.0 221.8 L348.5 221.8 L349.0 222.4 L349.5 222.9 L350.0 223.4 L350.5 223.8 L351.0 224.2 L351.5 224.4 L352.0 224.5 L352.5 224.6 L353.0 224.7 L353.5 224.8 L354.0 224.3 L354.5 219.8 L355.0 219.3 L355.5 219.1 L356.0 219.9 L356.5 220.3 L357.0 220.7 L357.5 221.0 L358.0 221.8 L358.5 222.3 L359.0 222.8 L359.5 223.1 L360.0 223.4 L360.5 223.5 L361.0 223.4 L361.5 223.3 L362.0 223.4 L362.5 223.1 L363.0 222.9 L363.5 222.7 L364.0 222.5 L364.5 222.4 L365.0 222.2 L365.5 221.7 L366.0 221.5 L366.5 221.1 L367.0 221.2 L367.5 220.9 L368.0 220.6 L368.5 220.4 L369.0 220.5 L369.5 220.1 L370.0 220.4 L370.5 220.6 L371.0 220.7 L371.5 220.5 L372.0 220.8 L372.5 221.1 L373.0 221.2 L373.5 221.3 L374.0 221.5 L374.5 221.6 L375.0 221.4 L375.5 221.6 L376.0 221.6 L376.5 221.3 L377.0 221.3 L377.5 221.6 L378.0 221.3 L378.5 221.3 L379.0 221.4 L379.5 221.5 L380.0 221.5 L380.5 221.5 L381.0 221.8 L381.5 222.2 L382.0 222.6 L382.5 222.9 L383.0 223.4 L383.5 223.7 L384.0 223.8 L384.5 223.9 L385.0 223.9 L385.5 220.2 L386.0 215.5 L386.5 216.5 L387.0 216.6 L387.5 217.5 L388.0 218.7 L388.5 219.6 L389.0 219.7 L389.5 219.9 L390.0 219.8 L390.5 219.3 L391.0 219.6 L391.5 219.6 L392.0 218.9 L392.5 219.3 L393.0 219.2 L393.5 218.5 L394.0 218.4 L394.5 218.4 L395.0 218.3 L395.5 218.2 L396.0 218.9 L396.5 218.4 L397.0 218.5 L397.5 217.9 L398.0 217.9 L398.5 217.6 L399.0 217.7 L399.5 217.9 L400.0 217.6 L400.5 217.7 L401.0 217.9 L401.5 218.1 L402.0 218.3 L402.5 218.3 L403.0 218.7 L403.5 218.7 L404.0 219.0 L404.5 219.1 L405.0 219.2 L405.5 219.2 L406.0 219.1 L406.5 218.9 L407.0 219.0 L407.5 219.2 L408.0 219.3 L408.5 219.3 L409.0 219.4 L409.5 219.3 L410.0 219.1 L410.5 219.0 L411.0 219.5 L411.5 220.0 L412.0 220.2 L412.5 221.4 L413.0 222.0 L413.5 222.4 L414.0 222.9 L414.5 223.0 L415.0 223.1 L415.5 223.4 L416.0 223.6 L416.5 224.0 L417.0 221.4 L417.5 219.6 L418.0 219.5 L418.5 220.0 L419.0 220.3 L419.5 220.2 L420.0 220.5 L420.5 220.8 L421.0 221.1 L421.5 221.4 L422.0 221.8 L422.5 222.0 L423.0 221.9 L423.5 222.0 L424.0 222.1 L424.5 222.2 L425.0 222.3 L425.5 221.9 L426.0 221.8 L426.5 221.8 L427.0 221.4 L427.5 221.3 L428.0 221.3 L428.5 221.2 L429.0 220.7 L429.5 220.7 L430.0 220.4 L430.5 220.3 L431.0 220.1 L431.5 220.2 L432.0 220.2 L432.5 219.8 L433.0 219.8 L433.5 220.3 L434.0 220.4 L434.5 220.4 L435.0 220.4 L435.5 220.7 L436.0 220.9 L436.5 221.4 L437.0 221.4 L437.5 221.5 L438.0 221.6 L438.5 221.7 L439.0 221.7 L439.5 222.1 L440.0 222.0 L440.5 222.6 L441.0 222.7 L441.5 223.0 L442.0 223.3 L442.5 223.6 L443.0 223.7 L443.5 223.7 L444.0 223.7 L444.5 224.0 L445.0 224.3 L445.5 224.5 L446.0 224.8 L446.5 225.0 L447.0 225.1 L447.5 225.0 L447.5 226.1 L447.0 226.1 L446.5 226.2 L446.0 226.4 L445.5 226.6 L445.0 226.9 L444.5 227.2 L444.0 227.3 L443.5 227.5 L443.0 227.6 L442.5 227.6 L442.0 227.8 L441.5 228.2 L441.0 228.4 L440.5 228.9 L440.0 229.0 L439.5 229.5 L439.0 229.3 L438.5 229.3 L438.0 229.4 L437.5 229.7 L437.0 229.9 L436.5 229.9 L436.0 230.2 L435.5 230.6 L435.0 230.7 L434.5 230.9 L434.0 231.1 L433.5 231.0 L433.0 231.1 L432.5 231.3 L432.0 231.4 L431.5 231.4 L431.0 231.3 L430.5 231.0 L430.0 231.0 L429.5 230.5 L429.0 230.5 L428.5 230.4 L428.0 230.0 L427.5 230.0 L427.0 229.7 L426.5 229.5 L426.0 229.4 L425.5 229.3 L425.0 229.2 L424.5 229.2 L424.0 229.2 L423.5 229.0 L423.0 229.3 L422.5 229.4 L422.0 229.5 L421.5 229.7 L421.0 229.9 L420.5 230.5 L420.0 230.9 L419.5 231.0 L419.0 231.1 L418.5 231.4 L418.0 231.3 L417.5 231.5 L417.0 229.5 L416.5 227.2 L416.0 227.4 L415.5 227.7 L415.0 228.2 L414.5 228.2 L414.0 228.5 L413.5 228.7 L413.0 229.4 L412.5 230.2 L412.0 230.5 L411.5 231.1 L411.0 232.0 L410.5 232.2 L410.0 231.9 L409.5 231.9 L409.0 232.0 L408.5 231.9 L408.0 231.9 L407.5 231.9 L407.0 232.3 L406.5 232.1 L406.0 231.8 L405.5 232.1 L405.0 232.1 L404.5 231.8 L404.0 232.0 L403.5 232.4 L403.0 232.5 L402.5 232.9 L402.0 233.4 L401.5 233.8 L401.0 233.8 L400.5 233.8 L400.0 233.6 L399.5 233.9 L399.0 233.3 L398.5 233.1 L398.0 233.3 L397.5 233.2 L397.0 233.1 L396.5 232.8 L396.0 232.6 L395.5 232.3 L395.0 232.9 L394.5 232.3 L394.0 232.8 L393.5 232.3 L393.0 232.3 L392.5 232.2 L392.0 232.3 L391.5 231.9 L391.0 231.7 L390.5 231.9 L390.0 231.7 L389.5 231.5 L389.0 231.7 L388.5 231.5 L388.0 232.5 L387.5 233.6 L387.0 233.9 L386.5 235.4 L386.0 235.6 L385.5 230.6 L385.0 227.3 L384.5 227.2 L384.0 227.3 L383.5 227.5 L383.0 227.8 L382.5 228.1 L382.0 228.7 L381.5 229.1 L381.0 229.3 L380.5 229.6 L380.0 229.8 L379.5 229.7 L379.0 230.0 L378.5 229.6 L378.0 229.9 L377.5 229.8 L377.0 229.7 L376.5 229.7 L376.0 229.7 L375.5 229.5 L375.0 229.8 L374.5 229.5 L374.0 229.8 L373.5 229.9 L373.0 229.9 L372.5 230.3 L372.0 230.2 L371.5 230.8 L371.0 230.8 L370.5 230.5 L370.0 231.1 L369.5 230.7 L369.0 230.9 L368.5 230.6 L368.0 230.4 L367.5 230.3 L367.0 230.0 L366.5 230.1 L366.0 229.8 L365.5 229.5 L365.0 229.2 L364.5 228.8 L364.0 228.7 L363.5 228.4 L363.0 228.1 L362.5 228.1 L362.0 228.0 L361.5 227.7 L361.0 227.7 L360.5 227.9 L360.0 227.9 L359.5 228.1 L359.0 228.7 L358.5 229.1 L358.0 229.7 L357.5 230.3 L357.0 230.7 L356.5 231.4 L356.0 231.7 L355.5 231.6 L355.0 231.9 L354.5 231.2 L354.0 226.9 L353.5 226.4 L353.0 226.5 L352.5 226.7 L352.0 226.7 L351.5 226.9 L351.0 227.1 L350.5 227.4 L350.0 227.9 L349.5 228.4 L349.0 228.7 L348.5 229.1 L348.0 229.8 L347.5 229.8 L347.0 230.3 L346.5 230.5 L346.0 230.6 L345.5 230.7 L345.0 230.4 L344.5 230.8 L344.0 231.2 L343.5 231.6 L343.0 231.4 L342.5 231.6 L342.0 231.9 L341.5 232.5 L341.0 232.2 L340.5 232.8 L340.0 232.3 L339.5 232.8 L339.0 232.1 L338.5 232.1 L338.0 232.2 L337.5 232.2 L337.0 231.9 L336.5 232.0 L336.0 232.1 L335.5 232.1 L335.0 232.0 L334.5 231.5 L334.0 231.7 L333.5 231.3 L333.0 230.9 L332.5 230.6 L332.0 230.8 L331.5 230.3 L331.0 230.4 L330.5 230.2 L330.0 230.3 L329.5 230.3 L329.0 230.2 L328.5 230.4 L328.0 230.6 L327.5 230.8 L327.0 231.4 L326.5 231.4 L326.0 232.3 L325.5 232.6 L325.0 232.6 L324.5 232.9 L324.0 233.3 L323.5 233.1 L323.0 230.7 L322.5 226.1 L322.0 226.1 L321.5 226.2 L321.0 226.3 L320.5 226.3 L320.0 226.5 L319.5 226.7 L319.0 227.1 L318.5 227.5 L318.0 227.6 L317.5 227.9 L317.0 228.1 L316.5 228.2 L316.0 228.3 L315.5 228.5 L315.0 228.7 L314.5 228.8 L314.0 229.3 L313.5 229.8 L313.0 229.9 L312.5 230.2 L312.0 230.8 L311.5 231.1 L311.0 230.7 L310.5 231.2 L310.0 231.0 L309.5 231.1 L309.0 230.9 L308.5 231.1 L308.0 231.3 L307.5 231.8 L307.0 231.8 L306.5 231.7 L306.0 232.1 L305.5 232.1 L305.0 232.4 L304.5 232.3 L304.0 232.3 L303.5 232.1 L303.0 232.2 L302.5 231.9 L302.0 231.4 L301.5 231.0 L301.0 231.0 L300.5 230.8 L300.0 230.1 L299.5 230.0 L299.0 229.9 L298.5 229.9 L298.0 229.4 L297.5 229.5 L297.0 229.5 L296.5 229.5 L296.0 229.7 L295.5 229.8 L295.0 230.2 L294.5 230.3 L294.0 230.7 L293.5 231.0 L293.0 231.2 L292.5 231.3 L292.0 231.2 L291.5 228.4 L291.0 226.3 L290.5 226.5 L290.0 226.6 L289.5 227.1 L289.0 227.7 L288.5 228.1 L288.0 228.8 L287.5 228.8 L287.0 228.8 L286.5 229.3 L286.0 229.8 L285.5 230.4 L285.0 230.7 L284.5 231.1 L284.0 232.0 L283.5 231.9 L283.0 232.0 L282.5 231.7 L282.0 231.9 L281.5 231.8 L281.0 231.9 L280.5 231.7 L280.0 232.2 L279.5 232.0 L279.0 231.9 L278.5 232.0 L278.0 232.0 L277.5 231.7 L277.0 232.0 L276.5 232.2 L276.0 231.9 L275.5 231.8 L275.0 232.0 L274.5 232.2 L274.0 231.8 L273.5 231.7 L273.0 231.6 L272.5 232.0 L272.0 231.6 L271.5 231.2 L271.0 231.2 L270.5 230.7 L270.0 230.4 L269.5 230.7 L269.0 230.1 L268.5 230.4 L268.0 230.2 L267.5 230.1 L267.0 230.2 L266.5 230.3 L266.0 230.5 L265.5 230.7 L265.0 230.5 L264.5 231.0 L264.0 231.2 L263.5 231.2 L263.0 231.5 L262.5 231.4 L262.0 232.0 L261.5 231.7 L261.0 231.8 L260.5 232.0 L260.0 227.6 L259.5 226.4 L259.0 226.6 L258.5 226.9 L258.0 227.5 L257.5 228.2 L257.0 228.9 L256.5 228.8 L256.0 229.0 L255.5 229.4 L255.0 230.0 L254.5 230.8 L254.0 231.2 L253.5 231.8 L253.0 231.8 L252.5 231.7 L252.0 232.3 L251.5 231.8 L251.0 231.8 L250.5 232.3 L250.0 232.4 L249.5 232.3 L249.0 232.0 L248.5 232.4 L248.0 232.4 L247.5 232.3 L247.0 232.1 L246.5 232.0 L246.0 232.3 L245.5 232.0 L245.0 232.0 L244.5 232.4 L244.0 232.6 L243.5 232.3 L243.0 232.3 L242.5 232.3 L242.0 232.4 L241.5 232.6 L241.0 232.6 L240.5 232.0 L240.0 231.9 L239.5 231.7 L239.0 231.3 L238.5 231.2 L238.0 230.6 L237.5 230.2 L237.0 230.1 L236.5 229.6 L236.0 229.6 L235.5 229.7 L235.0 229.6 L234.5 230.2 L234.0 230.4 L233.5 230.4 L233.0 231.0 L232.5 231.2 L232.0 230.8 L231.5 230.9 L231.0 231.1 L230.5 231.6 L230.0 231.6 L229.5 231.6 L229.0 231.7Z" fill="#2b2b2b"/><rect x="446.8" y="225.0" width="12.2" height="1.2" fill="#2b2b2b"/></svg>
<svg style="left:0px;top:0px;pointer-events:none;" width="1065" height="688" viewBox="0 0 1065 688"><path d="M229.0 267.5 L229.5 268.2 L230.0 268.6 L230.5 268.1 L231.0 268.8 L231.5 269.7 L232.0 269.2 L232.5 269.2 L233.0 269.9 L233.5 270.1 L234.0 270.5 L234.5 271.2 L235.0 271.9 L235.5 271.6 L236.0 271.8 L236.5 271.8 L237.0 271.4 L237.5 270.9 L238.0 269.7 L238.5 269.5 L239.0 269.2 L239.5 267.5 L240.0 267.3 L240.5 266.8 L241.0 266.9 L241.5 267.0 L242.0 267.0 L242.5 266.4 L243.0 266.6 L243.5 266.4 L244.0 266.6 L244.5 266.7 L245.0 267.5 L245.5 266.9 L246.0 267.4 L246.5 266.5 L247.0 266.9 L247.5 267.5 L248.0 267.8 L248.5 267.0 L249.0 266.9 L249.5 267.5 L250.0 267.2 L250.5 267.4 L251.0 267.3 L251.5 267.0 L252.0 267.5 L252.5 267.5 L253.0 267.9 L253.5 268.2 L254.0 269.0 L254.5 269.3 L255.0 270.6 L255.5 271.8 L256.0 273.0 L256.5 273.4 L257.0 273.3 L257.5 274.4 L258.0 275.8 L258.5 277.2 L259.0 277.5 L259.5 277.8 L260.0 276.0 L260.5 267.7 L261.0 267.3 L261.5 267.7 L262.0 267.7 L262.5 268.5 L263.0 268.2 L263.5 268.8 L264.0 268.9 L264.5 269.1 L265.0 269.7 L265.5 269.9 L266.0 270.9 L266.5 270.7 L267.0 270.8 L267.5 270.8 L268.0 271.4 L268.5 270.9 L269.0 270.7 L269.5 270.3 L270.0 269.9 L270.5 270.0 L271.0 268.6 L271.5 268.6 L272.0 267.8 L272.5 267.7 L273.0 267.8 L273.5 267.2 L274.0 267.2 L274.5 267.4 L275.0 267.9 L275.5 267.6 L276.0 267.7 L276.5 267.2 L277.0 267.0 L277.5 267.3 L278.0 267.3 L278.5 268.0 L279.0 267.4 L279.5 268.0 L280.0 267.6 L280.5 268.1 L281.0 267.8 L281.5 268.2 L282.0 267.5 L282.5 267.0 L283.0 268.1 L283.5 267.9 L284.0 268.3 L284.5 269.0 L285.0 269.2 L285.5 270.8 L286.0 271.8 L286.5 272.7 L287.0 273.4 L287.5 273.4 L288.0 273.8 L288.5 274.7 L289.0 275.4 L289.5 276.7 L290.0 277.4 L290.5 277.9 L291.0 278.2 L291.5 274.0 L292.0 268.6 L292.5 268.7 L293.0 268.8 L293.5 269.8 L294.0 269.9 L294.5 270.5 L295.0 270.9 L295.5 271.4 L296.0 271.4 L296.5 271.8 L297.0 272.0 L297.5 272.2 L298.0 272.2 L298.5 271.6 L299.0 271.4 L299.5 271.1 L300.0 270.4 L300.5 269.9 L301.0 269.5 L301.5 269.5 L302.0 268.5 L302.5 268.2 L303.0 267.6 L303.5 267.1 L304.0 267.2 L304.5 267.8 L305.0 267.8 L305.5 267.8 L306.0 267.2 L306.5 267.6 L307.0 267.6 L307.5 268.7 L308.0 268.7 L308.5 269.0 L309.0 269.4 L309.5 268.8 L310.0 269.8 L310.5 269.9 L311.0 269.1 L311.5 269.3 L312.0 270.3 L312.5 270.6 L313.0 271.5 L313.5 271.7 L314.0 272.5 L314.5 273.0 L315.0 273.9 L315.5 274.1 L316.0 274.5 L316.5 274.4 L317.0 274.7 L317.5 274.9 L318.0 275.4 L318.5 276.0 L319.0 276.7 L319.5 277.2 L320.0 277.8 L320.5 278.0 L321.0 278.1 L321.5 278.3 L322.0 278.4 L322.5 278.6 L323.0 269.5 L323.5 265.0 L324.0 264.6 L324.5 266.2 L325.0 266.0 L325.5 266.4 L326.0 267.9 L326.5 268.8 L327.0 268.7 L327.5 269.2 L328.0 270.5 L328.5 270.6 L329.0 270.8 L329.5 270.9 L330.0 270.7 L330.5 271.1 L331.0 270.2 L331.5 270.5 L332.0 270.3 L332.5 269.5 L333.0 268.8 L333.5 269.1 L334.0 268.0 L334.5 268.7 L335.0 268.4 L335.5 267.9 L336.0 267.8 L336.5 267.4 L337.0 267.6 L337.5 267.7 L338.0 266.6 L338.5 266.8 L339.0 266.2 L339.5 267.2 L340.0 266.8 L340.5 267.0 L341.0 266.2 L341.5 266.7 L342.0 267.6 L342.5 267.3 L343.0 268.6 L343.5 268.6 L344.0 269.3 L344.5 269.3 L345.0 270.0 L345.5 270.7 L346.0 270.6 L346.5 270.7 L347.0 270.7 L347.5 271.5 L348.0 271.6 L348.5 272.8 L349.0 273.5 L349.5 274.1 L350.0 275.0 L350.5 275.9 L351.0 276.6 L351.5 277.2 L352.0 277.4 L352.5 277.3 L353.0 277.5 L353.5 278.0 L354.0 277.1 L354.5 268.5 L355.0 267.4 L355.5 268.1 L356.0 268.7 L356.5 269.1 L357.0 270.4 L357.5 270.7 L358.0 272.0 L358.5 273.0 L359.0 273.7 L359.5 274.4 L360.0 275.1 L360.5 275.3 L361.0 275.6 L361.5 275.2 L362.0 275.3 L362.5 274.9 L363.0 274.7 L363.5 274.1 L364.0 273.5 L364.5 273.5 L365.0 272.6 L365.5 271.9 L366.0 271.5 L366.5 271.6 L367.0 270.8 L367.5 270.4 L368.0 270.2 L368.5 270.2 L369.0 269.5 L369.5 269.6 L370.0 269.8 L370.5 269.3 L371.0 270.1 L371.5 270.0 L372.0 270.8 L372.5 270.8 L373.0 271.1 L373.5 271.5 L374.0 271.2 L374.5 272.0 L375.0 271.5 L375.5 271.8 L376.0 272.1 L376.5 272.0 L377.0 271.3 L377.5 271.4 L378.0 271.7 L378.5 271.7 L379.0 271.0 L379.5 271.4 L380.0 271.5 L380.5 271.9 L381.0 272.2 L381.5 272.7 L382.0 274.0 L382.5 274.5 L383.0 275.3 L383.5 275.7 L384.0 276.1 L384.5 276.3 L385.0 276.2 L385.5 269.4 L386.0 262.5 L386.5 262.5 L387.0 263.6 L387.5 264.3 L388.0 266.4 L388.5 267.8 L389.0 268.9 L389.5 268.6 L390.0 267.9 L390.5 268.4 L391.0 267.4 L391.5 268.0 L392.0 266.8 L392.5 266.8 L393.0 266.7 L393.5 266.7 L394.0 266.3 L394.5 266.4 L395.0 266.6 L395.5 266.2 L396.0 265.9 L396.5 265.5 L397.0 265.3 L397.5 264.8 L398.0 265.3 L398.5 265.0 L399.0 264.9 L399.5 265.1 L400.0 265.0 L400.5 263.7 L401.0 265.0 L401.5 265.2 L402.0 265.0 L402.5 265.8 L403.0 266.7 L403.5 267.2 L404.0 267.5 L404.5 267.0 L405.0 267.3 L405.5 267.6 L406.0 267.3 L406.5 267.1 L407.0 268.0 L407.0 291.1 L406.5 290.5 L406.0 290.7 L405.5 291.2 L405.0 290.7 L404.5 290.6 L404.0 290.6 L403.5 291.0 L403.0 292.5 L402.5 293.1 L402.0 293.1 L401.5 293.9 L401.0 294.2 L400.5 294.3 L400.0 293.9 L399.5 293.7 L399.0 293.1 L398.5 292.8 L398.0 292.7 L397.5 293.5 L397.0 292.7 L396.5 292.8 L396.0 291.5 L395.5 292.2 L395.0 292.4 L394.5 291.6 L394.0 291.4 L393.5 291.4 L393.0 291.5 L392.5 291.5 L392.0 290.6 L391.5 290.2 L391.0 290.7 L390.5 289.9 L390.0 289.7 L389.5 289.6 L389.0 290.3 L388.5 290.1 L388.0 291.4 L387.5 293.9 L387.0 294.6 L386.5 294.5 L386.0 294.5 L385.5 288.3 L385.0 282.3 L384.5 282.4 L384.0 282.6 L383.5 282.8 L383.0 283.4 L382.5 283.9 L382.0 284.5 L381.5 285.7 L381.0 286.0 L380.5 286.5 L380.0 287.2 L379.5 287.1 L379.0 287.2 L378.5 287.2 L378.0 286.9 L377.5 287.1 L377.0 286.5 L376.5 286.5 L376.0 286.9 L375.5 286.5 L375.0 286.6 L374.5 287.0 L374.0 287.0 L373.5 287.4 L373.0 287.1 L372.5 288.0 L372.0 287.9 L371.5 288.6 L371.0 288.8 L370.5 289.1 L370.0 289.0 L369.5 289.2 L369.0 288.6 L368.5 289.0 L368.0 288.6 L367.5 288.3 L367.0 287.6 L366.5 287.5 L366.0 286.5 L365.5 286.4 L365.0 285.5 L364.5 285.2 L364.0 284.9 L363.5 284.4 L363.0 284.1 L362.5 283.7 L362.0 283.5 L361.5 283.4 L361.0 283.2 L360.5 283.3 L360.0 283.6 L359.5 284.2 L359.0 284.7 L358.5 285.7 L358.0 286.6 L357.5 287.2 L357.0 288.6 L356.5 289.4 L356.0 289.7 L355.5 289.7 L355.0 289.2 L354.5 289.0 L354.0 281.6 L353.5 280.8 L353.0 281.1 L352.5 281.4 L352.0 281.5 L351.5 281.6 L351.0 282.1 L350.5 282.8 L350.0 283.3 L349.5 284.2 L349.0 284.8 L348.5 285.7 L348.0 286.8 L347.5 287.5 L347.0 287.9 L346.5 288.2 L346.0 288.0 L345.5 288.6 L345.0 288.7 L344.5 288.6 L344.0 289.4 L343.5 290.1 L343.0 290.3 L342.5 291.3 L342.0 291.5 L341.5 291.8 L341.0 291.6 L340.5 292.3 L340.0 291.3 L339.5 292.0 L339.0 291.6 L338.5 291.2 L338.0 291.0 L337.5 291.2 L337.0 290.6 L336.5 290.5 L336.0 290.3 L335.5 291.1 L335.0 290.5 L334.5 289.9 L334.0 289.7 L333.5 289.6 L333.0 289.1 L332.5 288.4 L332.0 288.7 L331.5 288.1 L331.0 287.7 L330.5 287.5 L330.0 287.9 L329.5 287.7 L329.0 287.6 L328.5 287.6 L328.0 287.9 L327.5 288.3 L327.0 289.4 L326.5 290.0 L326.0 290.6 L325.5 291.3 L325.0 291.8 L324.5 293.0 L324.0 292.1 L323.5 292.7 L323.0 289.3 L322.5 280.1 L322.0 280.3 L321.5 280.5 L321.0 280.6 L320.5 280.7 L320.0 281.0 L319.5 281.4 L319.0 281.9 L318.5 282.6 L318.0 283.3 L317.5 283.6 L317.0 283.9 L316.5 284.4 L316.0 284.1 L315.5 284.2 L315.0 285.0 L314.5 285.0 L314.0 286.0 L313.5 286.5 L313.0 287.1 L312.5 288.0 L312.0 288.0 L311.5 289.0 L311.0 289.1 L310.5 289.0 L310.0 289.2 L309.5 289.2 L309.0 289.5 L308.5 289.4 L308.0 289.6 L307.5 290.3 L307.0 290.3 L306.5 290.5 L306.0 291.4 L305.5 290.5 L305.0 290.7 L304.5 291.6 L304.0 290.6 L303.5 290.7 L303.0 290.2 L302.5 290.7 L302.0 290.3 L301.5 289.4 L301.0 288.7 L300.5 288.1 L300.0 288.2 L299.5 287.5 L299.0 286.9 L298.5 286.5 L298.0 286.7 L297.5 286.5 L297.0 286.4 L296.5 286.5 L296.0 287.0 L295.5 287.3 L295.0 287.4 L294.5 288.4 L294.0 288.5 L293.5 288.6 L293.0 288.7 L292.5 289.7 L292.0 289.8 L291.5 284.5 L291.0 280.6 L290.5 280.9 L290.0 281.2 L289.5 282.2 L289.0 282.9 L288.5 283.9 L288.0 285.1 L287.5 285.0 L287.0 285.2 L286.5 286.0 L286.0 286.8 L285.5 288.0 L285.0 289.3 L284.5 289.4 L284.0 290.1 L283.5 291.0 L283.0 290.6 L282.5 291.1 L282.0 291.3 L281.5 291.3 L281.0 291.1 L280.5 291.1 L280.0 290.8 L279.5 290.6 L279.0 290.4 L278.5 290.5 L278.0 290.7 L277.5 291.0 L277.0 290.3 L276.5 291.0 L276.0 291.3 L275.5 291.3 L275.0 291.0 L274.5 291.1 L274.0 290.9 L273.5 290.4 L273.0 291.0 L272.5 290.5 L272.0 289.7 L271.5 289.8 L271.0 289.4 L270.5 289.4 L270.0 288.9 L269.5 288.5 L269.0 287.5 L268.5 287.6 L268.0 287.2 L267.5 287.2 L267.0 287.2 L266.5 287.4 L266.0 287.5 L265.5 288.2 L265.0 288.8 L264.5 288.6 L264.0 289.1 L263.5 289.8 L263.0 289.5 L262.5 290.4 L262.0 290.2 L261.5 290.3 L261.0 291.4 L260.5 290.8 L260.0 282.7 L259.5 280.9 L259.0 281.3 L258.5 281.8 L258.0 282.7 L257.5 283.9 L257.0 284.9 L256.5 285.1 L256.0 286.0 L255.5 286.5 L255.0 287.5 L254.5 288.8 L254.0 290.2 L253.5 291.0 L253.0 291.1 L252.5 290.7 L252.0 290.6 L251.5 290.8 L251.0 290.4 L250.5 291.6 L250.0 291.0 L249.5 291.5 L249.0 290.6 L248.5 291.2 L248.0 290.9 L247.5 291.2 L247.0 291.6 L246.5 290.7 L246.0 291.8 L245.5 290.9 L245.0 291.5 L244.5 292.0 L244.0 291.2 L243.5 291.2 L243.0 291.7 L242.5 292.4 L242.0 291.4 L241.5 291.9 L241.0 291.1 L240.5 291.9 L240.0 290.5 L239.5 289.9 L239.0 289.6 L238.5 289.0 L238.0 288.0 L237.5 288.1 L237.0 287.5 L236.5 286.7 L236.0 286.4 L235.5 286.9 L235.0 286.8 L234.5 287.5 L234.0 288.1 L233.5 288.7 L233.0 288.4 L232.5 288.6 L232.0 289.0 L231.5 289.1 L231.0 289.6 L230.5 289.4 L230.0 290.3 L229.5 291.0 L229.0 290.7Z" fill="#5e292d"/><path d="M229.0 301.8 L229.5 302.0 L230.0 302.1 L230.5 302.7 L231.0 303.3 L231.5 303.9 L232.0 303.3 L232.5 303.5 L233.0 304.2 L233.5 304.3 L234.0 304.8 L234.5 305.8 L235.0 305.6 L235.5 306.1 L236.0 306.5 L236.5 305.6 L237.0 305.7 L237.5 305.2 L238.0 304.5 L238.5 303.7 L239.0 303.4 L239.5 302.5 L240.0 301.8 L240.5 301.1 L241.0 300.5 L241.5 300.7 L242.0 300.7 L242.5 300.5 L243.0 301.3 L243.5 300.4 L244.0 301.2 L244.5 301.5 L245.0 301.7 L245.5 301.5 L246.0 301.3 L246.5 301.2 L247.0 301.8 L247.5 302.2 L248.0 301.8 L248.5 302.1 L249.0 301.5 L249.5 301.2 L250.0 302.0 L250.5 301.2 L251.0 301.6 L251.5 301.8 L252.0 301.9 L252.5 301.7 L253.0 301.8 L253.5 302.2 L254.0 303.0 L254.5 304.4 L255.0 305.6 L255.5 306.7 L256.0 306.9 L256.5 307.8 L257.0 308.0 L257.5 308.8 L258.0 310.2 L258.5 311.4 L259.0 311.9 L259.5 312.3 L260.0 310.1 L260.5 301.4 L261.0 301.5 L261.5 302.0 L262.0 301.9 L262.5 303.0 L263.0 302.5 L263.5 302.6 L264.0 303.4 L264.5 303.8 L265.0 304.6 L265.5 305.0 L266.0 305.2 L266.5 304.7 L267.0 305.3 L267.5 305.2 L268.0 305.4 L268.5 305.2 L269.0 305.2 L269.5 304.6 L270.0 304.2 L270.5 303.5 L271.0 303.9 L271.5 303.5 L272.0 302.9 L272.5 302.0 L273.0 302.3 L273.5 301.8 L274.0 302.1 L274.5 302.0 L275.0 301.8 L275.5 301.8 L276.0 301.6 L276.5 301.5 L277.0 301.5 L277.5 301.3 L278.0 302.4 L278.5 301.5 L279.0 302.1 L279.5 301.6 L280.0 302.2 L280.5 302.3 L281.0 301.6 L281.5 302.3 L282.0 301.5 L282.5 301.9 L283.0 301.4 L283.5 302.6 L284.0 301.9 L284.5 303.0 L285.0 303.7 L285.5 305.2 L286.0 306.0 L286.5 307.0 L287.0 307.7 L287.5 308.0 L288.0 308.1 L288.5 308.7 L289.0 309.8 L289.5 311.1 L290.0 311.8 L290.5 312.2 L291.0 312.6 L291.5 308.5 L292.0 303.7 L292.5 303.2 L293.0 303.6 L293.5 304.3 L294.0 304.7 L294.5 305.0 L295.0 305.1 L295.5 305.3 L296.0 306.0 L296.5 306.5 L297.0 306.0 L297.5 306.6 L298.0 306.4 L298.5 305.8 L299.0 305.8 L299.5 305.6 L300.0 305.3 L300.5 304.2 L301.0 303.7 L301.5 303.7 L302.0 302.8 L302.5 302.4 L303.0 302.2 L303.5 301.2 L304.0 302.1 L304.5 301.8 L305.0 301.5 L305.5 302.0 L306.0 301.8 L306.5 302.1 L307.0 302.8 L307.5 302.5 L308.0 302.8 L308.5 303.1 L309.0 303.7 L309.5 303.1 L310.0 303.4 L310.5 304.2 L311.0 304.3 L311.5 304.2 L312.0 304.2 L312.5 304.9 L313.0 305.9 L313.5 306.5 L314.0 307.2 L314.5 307.6 L315.0 308.2 L315.5 308.8 L316.0 309.0 L316.5 308.7 L317.0 309.2 L317.5 309.6 L318.0 309.8 L318.5 310.4 L319.0 311.2 L319.5 311.7 L320.0 312.3 L320.5 312.5 L321.0 312.6 L321.5 312.7 L322.0 312.9 L322.5 313.0 L323.0 304.2 L323.5 300.0 L324.0 299.2 L324.5 299.9 L325.0 300.2 L325.5 301.2 L326.0 301.7 L326.5 302.5 L327.0 303.7 L327.5 303.9 L328.0 304.3 L328.5 304.9 L329.0 305.5 L329.5 305.7 L330.0 305.8 L330.5 305.3 L331.0 304.7 L331.5 304.9 L332.0 304.7 L332.5 304.2 L333.0 303.9 L333.5 303.3 L334.0 302.8 L334.5 302.5 L335.0 302.1 L335.5 301.5 L336.0 301.9 L336.5 301.2 L337.0 301.9 L337.5 301.3 L338.0 301.3 L338.5 300.7 L339.0 301.2 L339.5 300.5 L340.0 300.5 L340.5 301.4 L341.0 300.9 L341.5 300.8 L342.0 301.6 L342.5 302.3 L343.0 302.8 L343.5 303.2 L344.0 303.5 L344.5 303.7 L345.0 304.0 L345.5 304.7 L346.0 304.5 L346.5 305.2 L347.0 305.2 L347.5 305.9 L348.0 306.5 L348.5 307.1 L349.0 308.0 L349.5 308.9 L350.0 309.7 L350.5 310.3 L351.0 310.9 L351.5 311.6 L352.0 311.7 L352.5 311.9 L353.0 312.0 L353.5 312.3 L354.0 311.5 L354.5 303.4 L355.0 301.5 L355.5 302.1 L356.0 303.2 L356.5 303.3 L357.0 304.1 L357.5 305.8 L358.0 306.3 L358.5 307.2 L359.0 308.1 L359.5 309.1 L360.0 309.5 L360.5 309.6 L361.0 309.8 L361.5 309.7 L362.0 309.4 L362.5 309.4 L363.0 309.1 L363.5 308.8 L364.0 307.9 L364.5 307.9 L365.0 307.3 L365.5 307.0 L366.0 306.5 L366.5 306.0 L367.0 305.2 L367.5 304.9 L368.0 304.7 L368.5 304.7 L369.0 303.9 L369.5 304.0 L370.0 304.1 L370.5 304.3 L371.0 304.0 L371.5 304.5 L372.0 305.2 L372.5 304.9 L373.0 305.2 L373.5 306.1 L374.0 305.9 L374.5 306.3 L375.0 306.1 L375.5 306.5 L376.0 306.4 L376.5 306.2 L377.0 305.8 L377.5 305.6 L378.0 305.9 L378.5 305.8 L379.0 305.8 L379.5 305.6 L380.0 305.5 L380.5 306.4 L381.0 306.9 L381.5 307.3 L382.0 308.2 L382.5 309.0 L383.0 309.6 L383.5 310.2 L384.0 310.4 L384.5 310.5 L385.0 310.7 L385.5 304.1 L386.0 296.9 L386.5 296.9 L387.0 297.4 L387.5 298.9 L388.0 300.5 L388.5 302.5 L389.0 302.4 L389.5 302.3 L390.0 302.3 L390.5 302.6 L391.0 302.4 L391.5 302.5 L392.0 301.5 L392.5 301.7 L393.0 300.9 L393.5 300.6 L394.0 300.4 L394.5 300.4 L395.0 300.5 L395.5 300.4 L396.0 301.0 L396.5 300.1 L397.0 299.9 L397.5 299.8 L398.0 300.0 L398.5 299.5 L399.0 298.4 L399.5 298.4 L400.0 298.0 L400.5 299.3 L401.0 298.2 L401.5 299.1 L402.0 299.5 L402.5 300.0 L403.0 300.9 L403.5 301.5 L404.0 301.8 L404.5 301.2 L405.0 302.1 L405.5 301.8 L406.0 302.1 L406.5 301.7 L407.0 302.4 L407.0 325.6 L406.5 324.9 L406.0 324.9 L405.5 325.2 L405.0 325.2 L404.5 324.9 L404.0 325.4 L403.5 326.5 L403.0 325.8 L402.5 326.9 L402.0 327.3 L401.5 328.2 L401.0 328.1 L400.5 328.3 L400.0 328.6 L399.5 328.7 L399.0 327.5 L398.5 327.4 L398.0 327.8 L397.5 326.7 L397.0 326.9 L396.5 326.1 L396.0 326.4 L395.5 326.3 L395.0 326.8 L394.5 326.7 L394.0 326.4 L393.5 325.9 L393.0 325.9 L392.5 325.9 L392.0 325.1 L391.5 324.6 L391.0 324.9 L390.5 324.7 L390.0 324.2 L389.5 324.0 L389.0 324.5 L388.5 325.3 L388.0 326.5 L387.5 328.0 L387.0 329.8 L386.5 329.2 L386.0 329.5 L385.5 323.3 L385.0 316.8 L384.5 316.9 L384.0 317.0 L383.5 317.3 L383.0 317.9 L382.5 318.3 L382.0 319.0 L381.5 319.8 L381.0 320.5 L380.5 321.2 L380.0 321.6 L379.5 321.6 L379.0 321.8 L378.5 321.7 L378.0 321.6 L377.5 321.6 L377.0 321.0 L376.5 321.1 L376.0 321.1 L375.5 321.3 L375.0 321.3 L374.5 321.5 L374.0 321.2 L373.5 321.6 L373.0 321.8 L372.5 322.0 L372.0 322.4 L371.5 322.5 L371.0 323.1 L370.5 323.1 L370.0 323.4 L369.5 323.6 L369.0 322.9 L368.5 323.1 L368.0 322.4 L367.5 322.6 L367.0 321.9 L366.5 321.8 L366.0 321.0 L365.5 320.7 L365.0 320.4 L364.5 320.0 L364.0 319.0 L363.5 318.8 L363.0 318.6 L362.5 318.1 L362.0 317.8 L361.5 317.8 L361.0 317.5 L360.5 317.9 L360.0 317.9 L359.5 318.5 L359.0 319.1 L358.5 319.9 L358.0 321.1 L357.5 322.3 L357.0 322.7 L356.5 324.0 L356.0 324.1 L355.5 324.1 L355.0 323.7 L354.5 323.2 L354.0 316.1 L353.5 315.3 L353.0 315.5 L352.5 315.8 L352.0 315.9 L351.5 316.1 L351.0 316.6 L350.5 317.1 L350.0 317.6 L349.5 318.6 L349.0 319.5 L348.5 320.1 L348.0 320.8 L347.5 321.3 L347.0 322.4 L346.5 322.5 L346.0 322.5 L345.5 322.8 L345.0 323.2 L344.5 323.0 L344.0 323.8 L343.5 324.5 L343.0 324.3 L342.5 325.7 L342.0 325.8 L341.5 326.3 L341.0 326.0 L340.5 326.1 L340.0 325.7 L339.5 326.6 L339.0 326.2 L338.5 326.3 L338.0 325.1 L337.5 325.9 L337.0 325.7 L336.5 325.3 L336.0 325.4 L335.5 324.7 L335.0 324.7 L334.5 324.2 L334.0 324.7 L333.5 324.1 L333.0 323.2 L332.5 323.1 L332.0 322.8 L331.5 322.6 L331.0 322.5 L330.5 322.4 L330.0 322.0 L329.5 322.0 L329.0 322.2 L328.5 321.9 L328.0 322.5 L327.5 323.1 L327.0 323.6 L326.5 324.6 L326.0 325.4 L325.5 326.2 L325.0 326.4 L324.5 327.1 L324.0 327.3 L323.5 327.2 L323.0 322.9 L322.5 314.6 L322.0 314.7 L321.5 314.8 L321.0 314.9 L320.5 315.1 L320.0 315.4 L319.5 315.8 L319.0 316.3 L318.5 317.0 L318.0 317.6 L317.5 318.0 L317.0 318.4 L316.5 318.8 L316.0 318.4 L315.5 318.6 L315.0 319.2 L314.5 319.8 L314.0 320.2 L313.5 321.2 L313.0 321.4 L312.5 322.7 L312.0 322.6 L311.5 323.5 L311.0 323.7 L310.5 323.7 L310.0 323.5 L309.5 323.3 L309.0 323.6 L308.5 323.9 L308.0 324.2 L307.5 324.0 L307.0 324.9 L306.5 324.4 L306.0 325.3 L305.5 325.8 L305.0 325.9 L304.5 325.3 L304.0 325.7 L303.5 324.9 L303.0 324.6 L302.5 325.1 L302.0 324.2 L301.5 324.2 L301.0 323.6 L300.5 322.7 L300.0 322.2 L299.5 321.6 L299.0 321.4 L298.5 320.8 L298.0 320.7 L297.5 321.0 L297.0 320.6 L296.5 321.0 L296.0 321.0 L295.5 321.6 L295.0 322.5 L294.5 322.6 L294.0 323.3 L293.5 323.2 L293.0 323.5 L292.5 323.5 L292.0 324.1 L291.5 319.0 L291.0 315.0 L290.5 315.4 L290.0 315.7 L289.5 316.5 L289.0 317.5 L288.5 318.3 L288.0 319.5 L287.5 319.4 L287.0 319.8 L286.5 320.5 L286.0 320.8 L285.5 321.8 L285.0 323.7 L284.5 324.5 L284.0 324.9 L283.5 324.8 L283.0 325.5 L282.5 325.1 L282.0 324.8 L281.5 325.4 L281.0 325.7 L280.5 324.7 L280.0 324.8 L279.5 325.3 L279.0 325.0 L278.5 324.7 L278.0 325.6 L277.5 325.5 L277.0 325.8 L276.5 325.2 L276.0 325.6 L275.5 325.3 L275.0 325.3 L274.5 325.6 L274.0 325.3 L273.5 325.3 L273.0 325.3 L272.5 325.0 L272.0 324.5 L271.5 323.7 L271.0 323.7 L270.5 323.4 L270.0 323.2 L269.5 322.3 L269.0 322.3 L268.5 321.8 L268.0 322.0 L267.5 321.9 L267.0 322.1 L266.5 322.4 L266.0 322.0 L265.5 322.3 L265.0 322.8 L264.5 323.7 L264.0 323.3 L263.5 323.8 L263.0 324.9 L262.5 325.1 L262.0 325.4 L261.5 325.6 L261.0 325.8 L260.5 325.3 L260.0 317.3 L259.5 315.3 L259.0 315.6 L258.5 316.1 L258.0 317.1 L257.5 318.7 L257.0 319.4 L256.5 319.6 L256.0 320.1 L255.5 320.9 L255.0 321.7 L254.5 323.3 L254.0 323.8 L253.5 325.6 L253.0 324.9 L252.5 325.4 L252.0 325.2 L251.5 325.3 L251.0 324.9 L250.5 325.4 L250.0 325.5 L249.5 325.7 L249.0 325.3 L248.5 325.4 L248.0 325.3 L247.5 325.8 L247.0 325.4 L246.5 325.5 L246.0 326.0 L245.5 325.3 L245.0 325.3 L244.5 326.0 L244.0 325.7 L243.5 326.0 L243.0 326.6 L242.5 325.7 L242.0 325.8 L241.5 326.1 L241.0 325.7 L240.5 325.8 L240.0 325.7 L239.5 324.3 L239.0 323.8 L238.5 323.8 L238.0 322.4 L237.5 322.2 L237.0 322.0 L236.5 321.2 L236.0 320.9 L235.5 320.8 L235.0 321.7 L234.5 321.9 L234.0 322.4 L233.5 322.7 L233.0 322.9 L232.5 323.5 L232.0 323.0 L231.5 324.0 L231.0 323.7 L230.5 323.9 L230.0 325.0 L229.5 324.7 L229.0 325.2Z" fill="#5e292d"/></svg>
<svg style="left:0px;top:0px;pointer-events:none;" width="1065" height="688" viewBox="0 0 1065 688"><g fill="#cfeaf8"><path d="M224.500 155h4.300v4.100z"/><path d="M459.100 155h4.200l-4.200 4z"/><path d="M229.100 385.700v4.300h-4.400z"/><path d="M458.500 385.700v4.300h4.700z"/></g></svg>
<div class="t" style="left:267px;top:344px;width:140px;height:12px;line-height:12px;font-size:10px;color:#f0f0ee;">Drop Files and Devices Here</div>
<div class="t" style="left:518px;top:367.3px;width:48.5px;height:18px;line-height:18px;font-size:19.500px;color:#383632;text-align:right;letter-spacing:0.400px;-webkit-text-stroke:0.3px #383632;">1/1</div>
<div style="left:407.0px;top:159px;width:1.1px;height:84px;background:#241616;"></div>
<div style="left:407.0px;top:185.2px;width:1.1px;height:12.4px;background:#fff;"></div>
<div style="left:407.0px;top:219.6px;width:1.1px;height:12.4px;background:#fff;"></div>
<div style="left:407.0px;top:243px;width:1.1px;height:142px;background:#fff;"></div>
<div style="left:101px;top:385px;width:1px;height:2px;background:#a9a69b;"></div>
<div style="left:134px;top:385px;width:0.8px;height:8px;background:#a9a69b;"></div>
<div style="left:134px;top:392px;width:1.8px;height:1px;background:#a9a69b;"></div>
<div class="t" style="left:137.2px;top:387px;width:40px;height:11px;line-height:11px;font-size:10.200px;letter-spacing:0.150px;font-weight:400;color:#d8d8d4;">5:00</div>
<div style="left:166px;top:385px;width:1px;height:2px;background:#a9a69b;"></div>
<div style="left:199px;top:385px;width:1px;height:2px;background:#a9a69b;"></div>
<div style="left:231px;top:385px;width:0.8px;height:8px;background:#a9a69b;"></div>
<div style="left:231px;top:392px;width:1.8px;height:1px;background:#a9a69b;"></div>
<div class="t" style="left:234.2px;top:387px;width:40px;height:11px;line-height:11px;font-size:10.200px;letter-spacing:0.150px;font-weight:400;color:#d8d8d4;">5:15</div>
<div style="left:263px;top:385px;width:1px;height:2px;background:#a9a69b;"></div>
<div style="left:296px;top:385px;width:1px;height:2px;background:#a9a69b;"></div>
<div style="left:328px;top:385px;width:0.8px;height:8px;background:#a9a69b;"></div>
<div style="left:328px;top:392px;width:1.8px;height:1px;background:#a9a69b;"></div>
<div class="t" style="left:331.2px;top:387px;width:40px;height:11px;line-height:11px;font-size:10.200px;letter-spacing:0.150px;font-weight:400;color:#d8d8d4;">5:30</div>
<div style="left:361px;top:385px;width:1px;height:2px;background:#a9a69b;"></div>
<div style="left:393px;top:385px;width:1px;height:2px;background:#a9a69b;"></div>
<div style="left:425px;top:385px;width:0.8px;height:8px;background:#a9a69b;"></div>
<div style="left:425px;top:392px;width:1.8px;height:1px;background:#a9a69b;"></div>
<div class="t" style="left:428.2px;top:387px;width:40px;height:11px;line-height:11px;font-size:10.200px;letter-spacing:0.150px;font-weight:400;color:#d8d8d4;">5:45</div>
<div style="left:458px;top:385px;width:1px;height:2px;background:#a9a69b;"></div>
<div style="left:490px;top:385px;width:1px;height:2px;background:#a9a69b;"></div>
<div style="left:523px;top:385px;width:0.8px;height:8px;background:#a9a69b;"></div>
<div style="left:523px;top:392px;width:1.8px;height:1px;background:#a9a69b;"></div>
<div class="t" style="left:526.2px;top:387px;width:40px;height:11px;line-height:11px;font-size:10.200px;letter-spacing:0.150px;font-weight:400;color:#d8d8d4;">6:00</div>
<div style="left:555px;top:385px;width:1px;height:2px;background:#a9a69b;"></div>
<div style="left:570px;top:159px;width:2px;height:226px;background:#45433d;"></div>
<div style="left:572px;top:159px;width:186px;height:84px;background:#f93a3c;"></div>
<div style="left:572px;top:245px;width:186px;height:86px;background:#e2579b;"></div>
<div style="left:572px;top:368px;width:186px;height:17px;background:#c9998b;"></div>
<div style="left:572px;top:333px;width:379px;height:32px;background:#66635b;"></div>
<div class="t" style="left:596px;top:158.7px;width:100px;height:12px;line-height:12px;color:#431616;font-size:10px;">chords</div>
<div class="t" style="left:595px;top:246.5px;width:140px;height:12px;line-height:12px;color:#431616;font-size:10px;letter-spacing:0.25px;">printing-chords</div>
<div class="t" style="left:597px;top:370.3px;width:100px;height:12px;line-height:12px;color:#3a2a24;font-size:10px;letter-spacing:0.5px;">Master</div>
<svg style="left:575px;top:159px;" width="13" height="13" viewBox="0 0 13 13"><circle cx="6.500" cy="6.500" r="5.800" fill="none" stroke="#5a1616" stroke-width="1.100"/><path d="M3.600 5h5.800l-2.900 4z" fill="#4a1414"/></svg>
<svg style="left:575px;top:247px;" width="13" height="13" viewBox="0 0 13 13"><circle cx="6.500" cy="6.500" r="5.800" fill="none" stroke="#5a1630" stroke-width="1.100"/><path d="M3.600 5h5.800l-2.900 4z" fill="#4a1424"/></svg>
<svg style="left:575px;top:369.5px;" width="13" height="13" viewBox="0 0 13 13"><circle cx="6.500" cy="6.500" r="5.800" fill="none" stroke="#4a3a34" stroke-width="1.100"/><path d="M5 3.600v5.800l4-2.900z" fill="#3a2a24"/></svg>
<div style="left:575px;top:127px;width:28px;height:11px;background:#55524b;border-radius:5.500px;"></div>
<div class="t" style="left:575px;top:126.7px;width:28px;height:11px;line-height:11px;text-align:center;font-size:10px;">Set</div>
<svg style="left:575px;top:142px;" width="11" height="11" viewBox="0 0 11 11"><circle cx="5.500" cy="5.500" r="5.500" fill="#55524b"/><path d="M2 5.500l3-2.600v1.800h4v1.600h-4v1.800z" fill="#fff"/></svg>
<svg style="left:592px;top:142px;" width="11" height="11" viewBox="0 0 11 11"><circle cx="5.500" cy="5.500" r="5.500" fill="#55524b"/><path d="M9 5.500l-3-2.600v1.800h-4v1.600h4v1.800z" fill="#fff"/></svg>
<div style="left:616px;top:142px;width:21px;height:11px;background:#55524b;"></div>
<div style="left:643px;top:142px;width:21px;height:11px;background:#55524b;"></div>
<svg style="left:616px;top:142px;" width="21" height="11" viewBox="0 0 21 11"><circle cx="8.300" cy="7.500" r="1.400" fill="#fff"/><circle cx="12.700" cy="3.500" r="1.400" fill="#fff"/><path d="M8.300 7.500L12.700 3.500" stroke="#fff" stroke-width="1"/></svg>
<svg style="left:643px;top:142px;" width="21" height="11" viewBox="0 0 21 11"><rect x="7" y="5" width="7" height="4.500" fill="#fff"/><path d="M8.500 5V4a2 2 0 0 1 4 0v1" fill="none" stroke="#fff" stroke-width="1.100"/></svg>
<div style="left:758px;top:159px;width:2px;height:84px;background:#45433d;"></div>
<div style="left:760px;top:159px;width:74px;height:84px;background:#66635b;"></div>
<div style="left:834px;top:159px;width:2px;height:84px;background:#45433d;"></div>
<div style="left:836px;top:159px;width:115px;height:84px;background:#66635b;"></div>
<div style="left:758px;top:245px;width:2px;height:86px;background:#45433d;"></div>
<div style="left:760px;top:245px;width:74px;height:86px;background:#807d70;"></div>
<div style="left:834px;top:245px;width:2px;height:86px;background:#45433d;"></div>
<div style="left:836px;top:245px;width:115px;height:86px;background:#807d70;"></div>
<div style="left:758px;top:368px;width:2px;height:17px;background:#45433d;"></div>
<div style="left:760px;top:368px;width:74px;height:17px;background:#66635b;"></div>
<div style="left:834px;top:368px;width:2px;height:17px;background:#45433d;"></div>
<div style="left:836px;top:368px;width:115px;height:17px;background:#66635b;"></div>
<div style="left:762px;top:159.2px;width:70px;height:12.5px;background:#403e39;"></div>
<div class="t" style="left:764px;top:160.39999999999998px;width:57.700000000000045px;height:12.5px;line-height:12.5px;overflow:hidden;font-size:9.700px;letter-spacing:0.350px;">No Input</div>
<svg style="left:823.4px;top:163.2px;" width="7" height="6" viewBox="0 0 7 6"><path d="M0 0h6.200l-3.100 4.700z" fill="#fff"/></svg>
<div style="left:762px;top:176.2px;width:70px;height:12.5px;background:#66635b;border:1px solid #403e39;box-sizing:border-box;"></div>
<div style="left:762px;top:210.2px;width:70px;height:12.5px;background:#403e39;"></div>
<div class="t" style="left:764px;top:211.39999999999998px;width:57.700000000000045px;height:12.5px;line-height:12.5px;overflow:hidden;font-size:9.700px;letter-spacing:0.350px;">Master</div>
<svg style="left:823.4px;top:214.2px;" width="7" height="6" viewBox="0 0 7 6"><path d="M0 0h6.200l-3.100 4.700z" fill="#fff"/></svg>
<div style="left:762px;top:227.2px;width:70px;height:12.5px;background:#66635b;border:1px solid #403e39;box-sizing:border-box;"></div>
<div style="left:762px;top:247px;width:70px;height:12.5px;background:#403e39;"></div>
<div class="t" style="left:764px;top:248.2px;width:57.700000000000045px;height:12.5px;line-height:12.5px;overflow:hidden;font-size:9.700px;letter-spacing:0.350px;">chords</div>
<svg style="left:823.4px;top:251px;" width="7" height="6" viewBox="0 0 7 6"><path d="M0 0h6.200l-3.100 4.700z" fill="#fff"/></svg>
<div style="left:762px;top:264px;width:70px;height:12.5px;background:#403e39;"></div>
<div style="left:764.6px;top:266.6px;width:1.8px;height:8px;background:#4be85d;"></div>
<div style="left:767px;top:266.6px;width:1.8px;height:8px;background:#4be85d;"></div>
<div class="t" style="left:772.5px;top:265.2px;width:49.200000000000045px;height:12.5px;line-height:12.5px;overflow:hidden;font-size:9.700px;letter-spacing:0.350px;">Post Mixer</div>
<svg style="left:823.4px;top:268px;" width="7" height="6" viewBox="0 0 7 6"><path d="M0 0h6.200l-3.100 4.700z" fill="#fff"/></svg>
<div style="left:762px;top:281px;width:17px;height:12.5px;background:#55524b;border:1px solid #403e39;box-sizing:border-box;"></div>
<div class="t" style="left:762px;top:282.2px;width:17px;height:12.5px;line-height:12.5px;text-align:center;">In</div>
<div style="left:782px;top:281px;width:27px;height:12.5px;background:#f9b23a;border:1px solid #403e39;box-sizing:border-box;"></div>
<div class="t" style="left:782px;top:282.2px;width:27px;height:12.5px;line-height:12.5px;text-align:center;color:#3a1510;font-weight:400;letter-spacing:0.300px;">Auto</div>
<div style="left:812px;top:281px;width:20px;height:12.5px;background:#55524b;border:1px solid #403e39;box-sizing:border-box;"></div>
<div class="t" style="left:812px;top:282.2px;width:20px;height:12.5px;line-height:12.5px;text-align:center;">Off</div>
<div style="left:762px;top:298px;width:70px;height:12.5px;background:#403e39;"></div>
<div class="t" style="left:764px;top:299.2px;width:57.700000000000045px;height:12.5px;line-height:12.5px;overflow:hidden;font-size:9.700px;letter-spacing:0.350px;">Master</div>
<svg style="left:823.4px;top:302px;" width="7" height="6" viewBox="0 0 7 6"><path d="M0 0h6.200l-3.100 4.700z" fill="#fff"/></svg>
<div style="left:762px;top:315px;width:70px;height:12.5px;background:#807d70;border:1px solid #403e39;box-sizing:border-box;"></div>
<div style="left:762px;top:370px;width:70px;height:12.5px;background:#403e39;"></div>
<div style="left:764.6px;top:372.6px;width:1.8px;height:8px;background:#4be85d;"></div>
<div style="left:767px;top:372.6px;width:1.8px;height:8px;background:#4be85d;"></div>
<div class="t" style="left:772.5px;top:371.2px;width:49.200000000000045px;height:12.5px;line-height:12.5px;overflow:hidden;font-size:9.700px;letter-spacing:0.350px;">1/2</div>
<svg style="left:823.4px;top:374px;" width="7" height="6" viewBox="0 0 7 6"><path d="M0 0h6.200l-3.100 4.700z" fill="#fff"/></svg>
<div style="left:839px;top:159.2px;width:46px;height:12.5px;background:#f9b23a;border:1px solid #403e39;box-sizing:border-box;"></div>
<div class="t" style="left:839px;top:160.39999999999998px;width:46px;height:12.5px;line-height:12.5px;text-align:center;color:#2a1a08;font-weight:400;">1</div>
<div style="left:889px;top:159.2px;width:21px;height:12.5px;background:#55524b;border:1px solid #403e39;box-sizing:border-box;"></div>
<div class="t" style="left:889px;top:160.39999999999998px;width:21px;height:12.5px;line-height:12.5px;text-align:center;font-size:9px;">S</div>
<div style="left:839px;top:176.2px;width:46px;height:12.5px;background:#403e39;"></div>
<div style="left:840px;top:177.2px;width:37px;height:10.5px;background:#44607d;"></div>
<div style="left:844.0px;top:180.89999999999998px;width:1px;height:1px;background:#75694f;"></div>
<div style="left:848.0px;top:180.89999999999998px;width:1px;height:1px;background:#75694f;"></div>
<div style="left:852.0px;top:180.89999999999998px;width:1px;height:1px;background:#75694f;"></div>
<div style="left:845.9px;top:184.89999999999998px;width:1px;height:1px;background:#75694f;"></div>
<div style="left:849.9px;top:184.89999999999998px;width:1px;height:1px;background:#75694f;"></div>
<div style="left:852.9px;top:184.89999999999998px;width:1px;height:1px;background:#75694f;"></div>
<div style="left:871.9px;top:182.89999999999998px;width:1px;height:1px;background:#75694f;"></div>
<div class="t" style="left:839px;top:177.39999999999998px;width:46px;height:12.5px;line-height:12.5px;text-align:center;">0</div>
<div style="left:889px;top:176.2px;width:46px;height:12.5px;background:#403e39;"></div>
<div class="t" style="left:889px;top:177.39999999999998px;width:46px;height:12.5px;line-height:12.5px;text-align:center;">C</div>
<div style="left:839px;top:247px;width:46px;height:12.5px;background:#f9b23a;border:1px solid #403e39;box-sizing:border-box;"></div>
<div class="t" style="left:839px;top:248.2px;width:46px;height:12.5px;line-height:12.5px;text-align:center;color:#2a1a08;font-weight:400;">2</div>
<div style="left:889px;top:247px;width:21px;height:12.5px;background:#55524b;border:1px solid #403e39;box-sizing:border-box;"></div>
<div class="t" style="left:889px;top:248.2px;width:21px;height:12.5px;line-height:12.5px;text-align:center;font-size:9px;">S</div>
<div style="left:914px;top:247px;width:21px;height:12.5px;background:#f93a3c;border:1px solid #403e39;box-sizing:border-box;"></div>
<div style="left:920.7px;top:249.5px;width:7.6px;height:7.6px;background:#1e1616;border-radius:50%;"></div>
<div style="left:839px;top:264px;width:46px;height:12.5px;background:#403e39;"></div>
<div style="left:840px;top:265px;width:37px;height:10.5px;background:#44607d;"></div>
<div style="left:844.0px;top:268.7px;width:1px;height:1px;background:#75694f;"></div>
<div style="left:848.0px;top:268.7px;width:1px;height:1px;background:#75694f;"></div>
<div style="left:852.0px;top:268.7px;width:1px;height:1px;background:#75694f;"></div>
<div style="left:845.9px;top:272.7px;width:1px;height:1px;background:#75694f;"></div>
<div style="left:849.9px;top:272.7px;width:1px;height:1px;background:#75694f;"></div>
<div style="left:852.9px;top:272.7px;width:1px;height:1px;background:#75694f;"></div>
<div style="left:871.9px;top:270.7px;width:1px;height:1px;background:#75694f;"></div>
<div class="t" style="left:839px;top:265.2px;width:46px;height:12.5px;line-height:12.5px;text-align:center;">0</div>
<div style="left:889px;top:264px;width:46px;height:12.5px;background:#403e39;"></div>
<div class="t" style="left:889px;top:265.2px;width:46px;height:12.5px;line-height:12.5px;text-align:center;">C</div>
<div style="left:839px;top:370px;width:46px;height:12.5px;background:#403e39;"></div>
<div style="left:840px;top:371px;width:37px;height:10.5px;background:#44607d;"></div>
<div style="left:844.0px;top:374.7px;width:1px;height:1px;background:#75694f;"></div>
<div style="left:848.0px;top:374.7px;width:1px;height:1px;background:#75694f;"></div>
<div style="left:852.0px;top:374.7px;width:1px;height:1px;background:#75694f;"></div>
<div style="left:845.9px;top:378.7px;width:1px;height:1px;background:#75694f;"></div>
<div style="left:849.9px;top:378.7px;width:1px;height:1px;background:#75694f;"></div>
<div style="left:852.9px;top:378.7px;width:1px;height:1px;background:#75694f;"></div>
<div style="left:871.9px;top:376.7px;width:1px;height:1px;background:#75694f;"></div>
<div class="t" style="left:839px;top:371.2px;width:46px;height:12.5px;line-height:12.5px;text-align:center;">0</div>
<div style="left:889px;top:370px;width:46px;height:12.5px;background:#403e39;"></div>
<div style="left:890px;top:371px;width:36.8px;height:10.5px;background:#4c8dc9;"></div>
<div class="t" style="left:889px;top:371.2px;width:46px;height:12.5px;line-height:12.5px;text-align:center;">0</div>
<div style="left:940.3px;top:159px;width:0.7px;height:84px;background:#56534c;"></div>
<div style="left:944px;top:159px;width:1px;height:84px;background:#56534c;"></div>
<div style="left:941px;top:159px;width:3px;height:84px;background:#4ae668;"></div>
<div style="left:941px;top:159px;width:3px;height:6.5px;background:#2b2e2b;"></div>
<div style="left:941px;top:165.5px;width:3px;height:1.6px;background:#66635b;"></div>
<div style="left:941px;top:167.1px;width:3px;height:2.7px;background:#2a2a2c;"></div>
<div style="left:941px;top:169.9px;width:3px;height:1.1px;background:#7ff35a;"></div>
<div style="left:941px;top:171px;width:3px;height:0.9px;background:#2e3a28;"></div>
<div style="left:941px;top:171.9px;width:3px;height:7px;background:#7a9a48;"></div>
<div style="left:941px;top:178.9px;width:3px;height:15px;background:#8df06a;"></div>
<div style="left:945px;top:159px;width:3px;height:84px;background:#4ae668;"></div>
<div style="left:945px;top:159px;width:3px;height:6.5px;background:#2b2e2b;"></div>
<div style="left:945px;top:165.5px;width:3px;height:1.6px;background:#66635b;"></div>
<div style="left:945px;top:167.1px;width:3px;height:2.7px;background:#2a2a2c;"></div>
<div style="left:945px;top:169.9px;width:3px;height:1.1px;background:#7ff35a;"></div>
<div style="left:945px;top:171px;width:3px;height:0.9px;background:#2e3a28;"></div>
<div style="left:945px;top:171.9px;width:3px;height:7px;background:#7a9a48;"></div>
<div style="left:945px;top:178.9px;width:3px;height:15px;background:#8df06a;"></div>
<div style="left:940.3px;top:245px;width:0.7px;height:86px;background:#56534c;"></div>
<div style="left:944px;top:245px;width:1px;height:86px;background:#56534c;"></div>
<div style="left:941px;top:245px;width:3px;height:86px;background:#4ae668;"></div>
<div style="left:941px;top:245px;width:3px;height:6.5px;background:#2b2e2b;"></div>
<div style="left:941px;top:251.5px;width:3px;height:1.6px;background:#807d70;"></div>
<div style="left:941px;top:253.1px;width:3px;height:2.7px;background:#2a2a2c;"></div>
<div style="left:941px;top:255.9px;width:3px;height:1.1px;background:#7ff35a;"></div>
<div style="left:941px;top:257px;width:3px;height:0.9px;background:#2e3a28;"></div>
<div style="left:941px;top:257.9px;width:3px;height:7px;background:#7a9a48;"></div>
<div style="left:941px;top:264.9px;width:3px;height:15px;background:#8df06a;"></div>
<div style="left:945px;top:245px;width:3px;height:86px;background:#4ae668;"></div>
<div style="left:945px;top:245px;width:3px;height:6.5px;background:#2b2e2b;"></div>
<div style="left:945px;top:251.5px;width:3px;height:1.6px;background:#807d70;"></div>
<div style="left:945px;top:253.1px;width:3px;height:2.7px;background:#2a2a2c;"></div>
<div style="left:945px;top:255.9px;width:3px;height:1.1px;background:#7ff35a;"></div>
<div style="left:945px;top:257px;width:3px;height:0.9px;background:#2e3a28;"></div>
<div style="left:945px;top:257.9px;width:3px;height:7px;background:#7a9a48;"></div>
<div style="left:945px;top:264.9px;width:3px;height:15px;background:#8df06a;"></div>
<div style="left:941px;top:369px;width:3px;height:16px;background:#4ae660;"></div>
<div style="left:941px;top:368.6px;width:3px;height:1.4px;background:#2a2a28;"></div>
<div style="left:941px;top:370.3px;width:3px;height:6px;background:#86e264;"></div>
<div style="left:945px;top:369px;width:3px;height:16px;background:#4ae660;"></div>
<div style="left:945px;top:368.6px;width:3px;height:1.4px;background:#2a2a28;"></div>
<div style="left:945px;top:370.3px;width:3px;height:6px;background:#86e264;"></div>
<div style="left:958px;top:306.0px;width:13px;height:13px;background:#f9b23a;border-radius:50%;"></div>
<div class="t" style="left:958px;top:306.0px;width:13px;height:13px;line-height:13px;text-align:center;font-size:6.5px;font-weight:400;color:#241e12;">I·O</div>
<div style="left:958px;top:325.0px;width:13px;height:13px;background:#f2f2f2;border-radius:50%;"></div>
<div class="t" style="left:958px;top:325.0px;width:13px;height:13px;line-height:13px;text-align:center;font-size:7px;font-weight:400;color:#241e12;">R</div>
<div style="left:958px;top:344.0px;width:13px;height:13px;background:#f9b23a;border-radius:50%;"></div>
<div class="t" style="left:958px;top:344.0px;width:13px;height:13px;line-height:13px;text-align:center;font-size:7px;font-weight:400;color:#241e12;">M</div>
<div style="left:958px;top:363.0px;width:13px;height:13px;background:#8c8c8a;border-radius:50%;"></div>
<div class="t" style="left:958px;top:363.0px;width:13px;height:13px;line-height:13px;text-align:center;font-size:7px;font-weight:400;color:#241e12;">D</div>
<div style="left:71.5px;top:410px;width:199px;height:195.5px;background:#45433d;border-radius:4px;"></div>
<div style="left:75px;top:414px;width:192px;height:188px;background:#66635b;"></div>
<div style="left:75px;top:414px;width:192px;height:17px;background:#807d70;"></div>
<div style="left:279px;top:410px;width:699px;height:196px;background:#45433d;border-radius:4px;"></div>
<div style="left:294px;top:414px;width:681px;height:188px;background:#66635b;"></div>
<div style="left:284px;top:487.5px;width:2.2px;height:41px;background:#4ae660;"></div>
<div style="left:286.8px;top:487.5px;width:2.2px;height:41px;background:#4ae660;"></div>
<div style="left:284px;top:487.5px;width:5px;height:3.5px;background:#2a2a28;"></div>
<div style="left:284px;top:491.5px;width:5px;height:14.5px;background:#8ad85a;"></div>
<div style="left:286.2px;top:487.5px;width:0.6px;height:41px;background:#45433d;"></div>
<div class="t" style="left:294px;top:500.5px;width:681px;height:14px;line-height:14px;text-align:center;font-size:10px;color:#f0f0ee;">Drop Audio Effects Here</div>
<div style="left:98px;top:614.5px;width:541.5px;height:21px;background:#45433d;border-radius:3px;"></div>
<div style="left:101px;top:617px;width:536px;height:16px;background:#66635b;"></div>
<div class="t" style="left:108px;top:616.5px;width:400px;height:16px;line-height:16px;font-size:10.500px;font-weight:400;color:#f4f4f2;letter-spacing:0.15px;-webkit-text-stroke:0.25px #f4f4f2;">237:23:29 of disk space available.</div>
<svg style="left:71px;top:614.6px;" width="19" height="19.2" viewBox="0 0 19 19.2"><circle cx="9.500" cy="9.550" r="9.500" fill="#45433d"/><path d="M3.900 14.300h11l-5.500-11z" fill="#55524b"/></svg>
<svg style="left:959px;top:614.6px;" width="19" height="19.2" viewBox="0 0 19 19.2"><circle cx="9.500" cy="9.550" r="9.500" fill="#45433d"/><path d="M3.900 14.300h11l-5.500-11z" fill="#55524b"/></svg>
<div style="left:648px;top:614.5px;width:206px;height:21px;background:#45433d;border-radius:3px;"></div>
<div style="left:651px;top:617px;width:200.5px;height:16px;background:#807d70;"></div>
<div style="left:862px;top:604px;width:89.3px;height:31.5px;background:#45433d;border-radius:0 0 3px 3px;"></div>
<div class="t" style="left:866px;top:618px;width:90px;height:14px;line-height:14px;font-size:10.300px;letter-spacing:0.15px;">printing-chords</div>
<svg style="left:0px;top:0px;pointer-events:none;" width="1065" height="688" viewBox="0 0 1065 688"><path d="M651.5 619.4 L652.5 619.6 L653.5 619.5 L654.5 619.8 L655.5 619.7 L656.5 620.0 L657.5 620.2 L658.5 620.1 L659.5 620.0 L660.5 619.6 L661.5 619.5 L662.5 619.4 L663.5 619.2 L664.5 619.1 L665.5 619.4 L666.5 619.4 L667.5 619.3 L668.5 619.1 L669.5 619.3 L670.5 619.4 L671.5 619.2 L672.5 619.5 L673.5 619.4 L674.5 620.1 L675.5 620.4 L676.5 620.6 L677.5 620.9 L678.5 620.9 L679.5 619.5 L680.5 619.4 L681.5 619.5 L682.5 619.8 L683.5 619.8 L684.5 620.1 L685.5 620.1 L686.5 620.0 L687.5 619.7 L688.5 619.6 L689.5 619.5 L690.5 619.3 L691.5 619.4 L692.5 619.4 L693.5 619.2 L694.5 619.3 L695.5 619.5 L696.5 619.4 L697.5 619.4 L698.5 619.2 L699.5 619.4 L700.5 619.9 L701.5 620.1 L702.5 620.5 L703.5 620.7 L704.5 620.9 L705.5 620.9 L706.5 619.6 L707.5 619.9 L708.5 619.8 L709.5 620.0 L710.5 620.1 L711.5 620.0 L712.5 620.1 L713.5 619.8 L714.5 619.6 L715.5 619.4 L716.5 619.4 L717.5 619.2 L718.5 619.2 L719.5 619.5 L720.5 619.5 L721.5 619.8 L722.5 619.6 L723.5 619.7 L724.5 619.9 L725.5 620.2 L726.5 620.5 L727.5 620.6 L728.5 620.7 L729.5 620.9 L730.5 620.9 L731.5 620.9 L732.5 620.9 L733.5 619.2 L734.5 619.0 L735.5 619.5 L736.5 619.7 L737.5 619.9 L738.5 619.9 L739.5 620.1 L740.5 619.9 L741.5 619.7 L742.5 619.4 L743.5 619.3 L744.5 619.2 L745.5 619.4 L746.5 619.3 L747.5 619.3 L748.5 619.0 L749.5 619.1 L750.5 619.6 L751.5 619.8 L752.5 619.9 L753.5 620.0 L754.5 620.1 L755.5 620.4 L756.5 620.8 L757.5 620.9 L758.5 620.9 L759.5 620.9 L760.5 619.3 L761.5 619.3 L762.5 619.8 L763.5 620.2 L764.5 620.5 L765.5 620.7 L766.5 620.8 L767.5 620.5 L768.5 620.4 L769.5 620.1 L770.5 620.0 L771.5 619.9 L772.5 619.8 L773.5 619.9 L774.5 619.7 L775.5 620.0 L776.5 620.1 L777.5 620.2 L778.5 620.2 L779.5 620.1 L780.5 620.2 L781.5 620.2 L782.5 620.2 L783.5 620.4 L784.5 620.6 L785.5 620.9 L786.5 620.8 L787.5 618.2 L788.5 618.9 L789.5 619.5 L790.5 619.6 L791.5 619.5 L792.5 619.5 L793.5 619.1 L794.5 619.0 L795.5 619.2 L796.5 619.1 L797.5 619.2 L798.5 619.1 L799.5 618.9 L800.5 619.0 L801.5 618.9 L802.5 619.4 L803.5 619.6 L804.5 619.2 L805.5 619.3 L806.5 619.5 L807.5 619.3 L808.5 619.6 L809.5 619.6 L810.5 619.9 L811.5 620.4 L812.5 620.6 L813.5 620.8 L814.5 619.6 L815.5 619.7 L816.5 619.6 L817.5 619.9 L818.5 620.1 L819.5 620.3 L820.5 620.4 L821.5 620.2 L822.5 620.1 L823.5 619.9 L824.5 619.8 L825.5 619.6 L826.5 619.5 L827.5 619.7 L828.5 619.6 L829.5 619.8 L830.5 620.1 L831.5 620.2 L832.5 620.2 L833.5 620.3 L834.5 620.3 L835.5 620.5 L836.5 620.8 L837.5 620.8 L838.5 620.9 L839.5 620.9 L840.5 620.9 L841.5 620.9 L842.5 620.9 L843.5 620.9 L844.5 620.9 L845.5 620.9 L846.5 620.9 L847.5 620.9 L848.5 620.9 L849.5 620.9 L849.5 621.9 L848.5 621.9 L847.5 621.9 L846.5 621.9 L845.5 621.9 L844.5 621.9 L843.5 621.9 L842.5 621.9 L841.5 621.9 L840.5 621.9 L839.5 621.9 L838.5 621.9 L837.5 622.0 L836.5 622.0 L835.5 622.3 L834.5 622.5 L833.5 622.5 L832.5 622.6 L831.5 622.6 L830.5 622.7 L829.5 623.0 L828.5 623.2 L827.5 623.1 L826.5 623.3 L825.5 623.2 L824.5 623.0 L823.5 622.9 L822.5 622.7 L821.5 622.6 L820.5 622.4 L819.5 622.5 L818.5 622.7 L817.5 622.9 L816.5 623.2 L815.5 623.1 L814.5 623.2 L813.5 622.0 L812.5 622.2 L811.5 622.4 L810.5 622.9 L809.5 623.2 L808.5 623.2 L807.5 623.5 L806.5 623.3 L805.5 623.5 L804.5 623.6 L803.5 623.2 L802.5 623.4 L801.5 623.9 L800.5 623.8 L799.5 623.9 L798.5 623.7 L797.5 623.6 L796.5 623.7 L795.5 623.6 L794.5 623.8 L793.5 623.7 L792.5 623.3 L791.5 623.3 L790.5 623.2 L789.5 623.3 L788.5 623.9 L787.5 624.6 L786.5 622.0 L785.5 621.9 L784.5 622.2 L783.5 622.4 L782.5 622.6 L781.5 622.6 L780.5 622.6 L779.5 622.7 L778.5 622.6 L777.5 622.6 L776.5 622.7 L775.5 622.8 L774.5 623.1 L773.5 622.9 L772.5 623.0 L771.5 622.9 L770.5 622.8 L769.5 622.7 L768.5 622.4 L767.5 622.3 L766.5 622.0 L765.5 622.1 L764.5 622.3 L763.5 622.6 L762.5 623.0 L761.5 623.5 L760.5 623.5 L759.5 621.9 L758.5 621.9 L757.5 621.9 L756.5 622.0 L755.5 622.4 L754.5 622.7 L753.5 622.8 L752.5 622.9 L751.5 623.0 L750.5 623.2 L749.5 623.7 L748.5 623.8 L747.5 623.5 L746.5 623.5 L745.5 623.4 L744.5 623.6 L743.5 623.5 L742.5 623.4 L741.5 623.1 L740.5 622.9 L739.5 622.7 L738.5 622.9 L737.5 622.9 L736.5 623.1 L735.5 623.3 L734.5 623.8 L733.5 623.6 L732.5 621.9 L731.5 621.9 L730.5 621.9 L729.5 621.9 L728.5 622.1 L727.5 622.2 L726.5 622.3 L725.5 622.6 L724.5 622.9 L723.5 623.1 L722.5 623.2 L721.5 623.0 L720.5 623.3 L719.5 623.3 L718.5 623.6 L717.5 623.6 L716.5 623.4 L715.5 623.4 L714.5 623.2 L713.5 623.0 L712.5 622.7 L711.5 622.8 L710.5 622.7 L709.5 622.8 L708.5 623.0 L707.5 622.9 L706.5 623.2 L705.5 621.9 L704.5 621.9 L703.5 622.1 L702.5 622.3 L701.5 622.7 L700.5 622.9 L699.5 623.4 L698.5 623.6 L697.5 623.4 L696.5 623.4 L695.5 623.3 L694.5 623.5 L693.5 623.6 L692.5 623.4 L691.5 623.4 L690.5 623.5 L689.5 623.3 L688.5 623.2 L687.5 623.1 L686.5 622.8 L685.5 622.7 L684.5 622.7 L683.5 623.0 L682.5 623.0 L681.5 623.3 L680.5 623.4 L679.5 623.3 L678.5 621.9 L677.5 621.9 L676.5 622.2 L675.5 622.4 L674.5 622.7 L673.5 623.4 L672.5 623.3 L671.5 623.6 L670.5 623.4 L669.5 623.5 L668.5 623.7 L667.5 623.5 L666.5 623.4 L665.5 623.4 L664.5 623.7 L663.5 623.6 L662.5 623.4 L661.5 623.3 L660.5 623.2 L659.5 622.8 L658.5 622.7 L657.5 622.6 L656.5 622.8 L655.5 623.1 L654.5 623.0 L653.5 623.3 L652.5 623.2 L651.5 623.4Z" fill="#2d2d2a"/><path d="M651.5 627.4 L652.5 627.8 L653.5 627.7 L654.5 627.8 L655.5 627.9 L656.5 628.1 L657.5 628.3 L658.5 628.3 L659.5 628.0 L660.5 627.9 L661.5 627.4 L662.5 627.2 L663.5 627.4 L664.5 627.5 L665.5 627.3 L666.5 627.4 L667.5 627.7 L668.5 627.7 L669.5 627.7 L670.5 627.4 L671.5 627.4 L672.5 627.7 L673.5 627.6 L674.5 628.1 L675.5 628.5 L676.5 628.8 L677.5 629.1 L678.5 629.1 L679.5 627.8 L680.5 627.4 L681.5 627.7 L682.5 627.9 L683.5 627.9 L684.5 628.2 L685.5 628.1 L686.5 628.0 L687.5 628.1 L688.5 627.9 L689.5 627.7 L690.5 627.7 L691.5 627.5 L692.5 627.7 L693.5 627.6 L694.5 627.7 L695.5 627.4 L696.5 627.6 L697.5 627.6 L698.5 627.6 L699.5 627.5 L700.5 628.1 L701.5 628.3 L702.5 628.6 L703.5 628.8 L704.5 629.1 L705.5 629.1 L706.5 627.9 L707.5 628.0 L708.5 628.2 L709.5 628.1 L710.5 628.4 L711.5 628.3 L712.5 628.2 L713.5 628.0 L714.5 627.9 L715.5 627.6 L716.5 627.5 L717.5 627.4 L718.5 627.7 L719.5 627.7 L720.5 627.9 L721.5 628.0 L722.5 627.8 L723.5 628.0 L724.5 628.2 L725.5 628.4 L726.5 628.6 L727.5 628.8 L728.5 628.9 L729.5 629.1 L730.5 629.1 L731.5 629.1 L732.5 629.1 L733.5 627.1 L734.5 627.3 L735.5 627.3 L736.5 627.7 L737.5 627.9 L738.5 628.0 L739.5 628.2 L740.5 628.0 L741.5 627.8 L742.5 627.6 L743.5 627.8 L744.5 627.7 L745.5 627.6 L746.5 627.7 L747.5 627.5 L748.5 627.6 L749.5 627.4 L750.5 627.6 L751.5 627.8 L752.5 628.2 L753.5 628.0 L754.5 628.2 L755.5 628.7 L756.5 628.9 L757.5 629.1 L758.5 629.1 L759.5 629.1 L760.5 627.6 L761.5 627.7 L762.5 627.9 L763.5 628.3 L764.5 628.8 L765.5 628.9 L766.5 628.9 L767.5 628.8 L768.5 628.7 L769.5 628.5 L770.5 628.2 L771.5 628.2 L772.5 627.9 L773.5 628.0 L774.5 628.1 L775.5 628.1 L776.5 628.2 L777.5 628.3 L778.5 628.4 L779.5 628.2 L780.5 628.2 L781.5 628.1 L782.5 628.4 L783.5 628.5 L784.5 628.9 L785.5 629.0 L786.5 629.1 L787.5 626.7 L788.5 627.0 L789.5 627.4 L790.5 627.6 L791.5 627.8 L792.5 627.7 L793.5 627.3 L794.5 627.4 L795.5 627.3 L796.5 627.5 L797.5 627.4 L798.5 627.0 L799.5 627.1 L800.5 627.3 L801.5 627.0 L802.5 627.4 L803.5 627.4 L804.5 627.7 L805.5 627.4 L806.5 627.7 L807.5 627.4 L808.5 627.6 L809.5 627.8 L810.5 628.2 L811.5 628.6 L812.5 628.8 L813.5 629.1 L814.5 627.7 L815.5 627.9 L816.5 628.1 L817.5 628.2 L818.5 628.4 L819.5 628.5 L820.5 628.6 L821.5 628.5 L822.5 628.3 L823.5 628.3 L824.5 628.1 L825.5 628.0 L826.5 627.9 L827.5 628.0 L828.5 627.9 L829.5 628.1 L830.5 628.1 L831.5 628.3 L832.5 628.4 L833.5 628.4 L834.5 628.5 L835.5 628.9 L836.5 628.9 L837.5 629.0 L838.5 629.1 L839.5 629.1 L840.5 629.1 L841.5 629.1 L842.5 629.1 L843.5 629.1 L844.5 629.1 L845.5 629.1 L846.5 629.1 L847.5 629.1 L848.5 629.1 L849.5 629.1 L849.5 630.1 L848.5 630.1 L847.5 630.1 L846.5 630.1 L845.5 630.1 L844.5 630.1 L843.5 630.1 L842.5 630.1 L841.5 630.1 L840.5 630.1 L839.5 630.1 L838.5 630.1 L837.5 630.2 L836.5 630.3 L835.5 630.3 L834.5 630.7 L833.5 630.8 L832.5 630.8 L831.5 630.9 L830.5 631.1 L829.5 631.1 L828.5 631.3 L827.5 631.2 L826.5 631.3 L825.5 631.2 L824.5 631.1 L823.5 630.9 L822.5 630.9 L821.5 630.7 L820.5 630.6 L819.5 630.7 L818.5 630.8 L817.5 631.0 L816.5 631.1 L815.5 631.3 L814.5 631.5 L813.5 630.1 L812.5 630.4 L811.5 630.6 L810.5 631.0 L809.5 631.4 L808.5 631.6 L807.5 631.8 L806.5 631.5 L805.5 631.8 L804.5 631.5 L803.5 631.8 L802.5 631.8 L801.5 632.2 L800.5 631.9 L799.5 632.1 L798.5 632.2 L797.5 631.8 L796.5 631.7 L795.5 631.9 L794.5 631.8 L793.5 631.9 L792.5 631.5 L791.5 631.4 L790.5 631.6 L789.5 631.8 L788.5 632.2 L787.5 632.5 L786.5 630.1 L785.5 630.2 L784.5 630.3 L783.5 630.7 L782.5 630.8 L781.5 631.1 L780.5 631.0 L779.5 631.0 L778.5 630.8 L777.5 630.9 L776.5 631.0 L775.5 631.1 L774.5 631.1 L773.5 631.2 L772.5 631.3 L771.5 631.0 L770.5 631.0 L769.5 630.7 L768.5 630.5 L767.5 630.4 L766.5 630.3 L765.5 630.3 L764.5 630.4 L763.5 630.9 L762.5 631.3 L761.5 631.5 L760.5 631.6 L759.5 630.1 L758.5 630.1 L757.5 630.1 L756.5 630.3 L755.5 630.5 L754.5 631.0 L753.5 631.2 L752.5 631.0 L751.5 631.4 L750.5 631.6 L749.5 631.8 L748.5 631.6 L747.5 631.7 L746.5 631.5 L745.5 631.6 L744.5 631.5 L743.5 631.4 L742.5 631.6 L741.5 631.4 L740.5 631.2 L739.5 631.0 L738.5 631.2 L737.5 631.3 L736.5 631.5 L735.5 631.9 L734.5 631.9 L733.5 632.1 L732.5 630.1 L731.5 630.1 L730.5 630.1 L729.5 630.1 L728.5 630.3 L727.5 630.4 L726.5 630.6 L725.5 630.8 L724.5 631.0 L723.5 631.2 L722.5 631.4 L721.5 631.2 L720.5 631.3 L719.5 631.5 L718.5 631.5 L717.5 631.8 L716.5 631.7 L715.5 631.6 L714.5 631.3 L713.5 631.2 L712.5 631.0 L711.5 630.9 L710.5 630.8 L709.5 631.1 L708.5 631.0 L707.5 631.2 L706.5 631.3 L705.5 630.1 L704.5 630.1 L703.5 630.4 L702.5 630.6 L701.5 630.9 L700.5 631.1 L699.5 631.7 L698.5 631.6 L697.5 631.6 L696.5 631.6 L695.5 631.8 L694.5 631.5 L693.5 631.6 L692.5 631.5 L691.5 631.7 L690.5 631.5 L689.5 631.5 L688.5 631.3 L687.5 631.1 L686.5 631.2 L685.5 631.1 L684.5 631.0 L683.5 631.3 L682.5 631.3 L681.5 631.5 L680.5 631.8 L679.5 631.4 L678.5 630.1 L677.5 630.1 L676.5 630.4 L675.5 630.7 L674.5 631.1 L673.5 631.6 L672.5 631.5 L671.5 631.8 L670.5 631.8 L669.5 631.5 L668.5 631.5 L667.5 631.5 L666.5 631.8 L665.5 631.9 L664.5 631.7 L663.5 631.8 L662.5 632.0 L661.5 631.8 L660.5 631.3 L659.5 631.2 L658.5 630.9 L657.5 630.9 L656.5 631.1 L655.5 631.3 L654.5 631.4 L653.5 631.5 L652.5 631.4 L651.5 631.8Z" fill="#2d2d2a"/><rect x="807.500" y="617" width="1" height="16" fill="#fff"/></svg>
</body></html>
